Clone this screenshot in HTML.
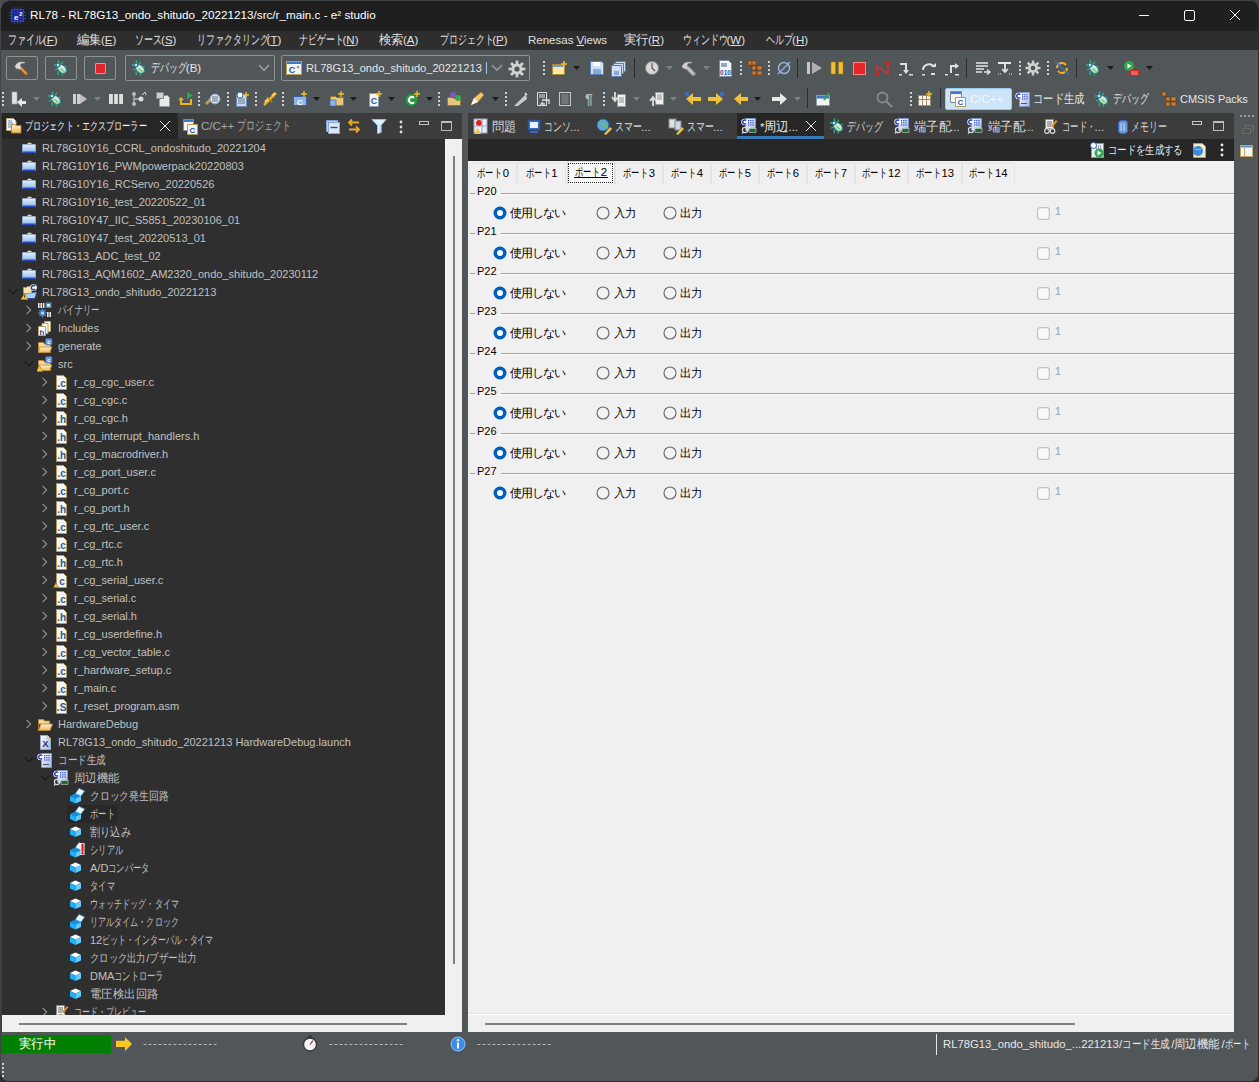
<!DOCTYPE html><html><head><meta charset="utf-8"><style>
html,body{margin:0;padding:0}
body{width:1259px;height:1082px;overflow:hidden;position:relative;background:#515658;font-family:"Liberation Sans", sans-serif}
.t{position:absolute;white-space:nowrap}
.b{position:absolute}
</style></head><body>

<svg width="0" height="0" style="position:absolute">
<defs>
<linearGradient id="gfold" x1="0" y1="0" x2="0" y2="1"><stop offset="0" stop-color="#e6f2ff"/><stop offset="1" stop-color="#8cb8ee"/></linearGradient><symbol id="fold" viewBox="0 0 16 16"><path d="M6 4.5q0-2 2.5-2t2.5 2z" fill="#f2d27a"/><path d="M1.5 4.5h13v8h-13z" fill="url(#gfold)" stroke="#9ab0cc" stroke-width=".8"/><rect x="1.5" y="11.5" width="13" height="1.6" fill="#2848c0"/></symbol>
<symbol id="projc" viewBox="0 0 16 16"><path d="M2.5 3.5h3l1-1h4v7h-8z" fill="#f8e2a8" stroke="#c8a050" stroke-width=".8"/><path d="M4 10l11.5-1.8-2 6.3H3z" fill="#a8d4fa" stroke="#5a80c8" stroke-width=".6"/><path d="M3 14.8h10.6" stroke="#2838c0" stroke-width="1.2"/><circle cx="12.5" cy="3.6" r="3.4" fill="#fff"/><path d="M14.2 2.2a2.2 2.2 0 1 0 0 2.9" fill="none" stroke="#1f4f9f" stroke-width="1.6"/><path d="M3.5 9.2L7 15.6H0z" fill="#f8c84a" stroke="#b08018" stroke-width=".6"/><path d="M3.5 11.2v2.4" stroke="#222" stroke-width=".9"/></symbol>
<symbol id="bin" viewBox="0 0 16 16"><g fill="#e8e8e8"><rect x="1" y="1" width="1.6" height="5"/><rect x="3.4" y="1" width="1.6" height="5"/><rect x="5.8" y="1" width="1.6" height="5"/><rect x="10" y="10" width="1.6" height="5"/><rect x="12.4" y="10" width="1.6" height="5"/></g><path d="M8.5 .5h6v5.5h-6z" fill="#5a8ab0"/><path d="M10 2h3v2.5h-3z" fill="#dfefff"/><circle cx="5.5" cy="11" r="3.2" fill="#3a70b0"/><g stroke="#4a88c8" stroke-width="1.2"><path d="M5.5 6.5v9M1 11h9M2.3 7.8l6.4 6.4M8.7 7.8l-6.4 6.4"/></g><circle cx="5.5" cy="11" r="1.6" fill="#b8e0c8"/></symbol>
<symbol id="inc" viewBox="0 0 16 16"><path d="M7.5 1.5h6v10h-6z" fill="#f4f4f4" stroke="#bba46a"/><path d="M5 3.5h6v10h-6z" fill="#f4f4f4" stroke="#bba46a"/><path d="M1.5 6.5h7v9h-7z" fill="#fff" stroke="#bba46a"/><text x="5" y="14.5" font-size="8" font-family="Liberation Sans" font-weight="bold" text-anchor="middle" fill="#2a4f9a">h</text></symbol>
<symbol id="srcf" viewBox="0 0 16 16"><path d="M1.5 4.5h5l1 1.5h6v8.5h-12z" fill="#f4d898" stroke="#c08a30" stroke-width=".8"/><path d="M2.5 9h12.5l-2.5 5.5h-11z" fill="url(#gfld)" stroke="#c08a30" stroke-width=".8"/><rect x="8.5" y="0.5" width="6.5" height="6.5" rx="1" fill="#6d97e0" stroke="#3d5fa8" stroke-width=".6"/><text x="11.8" y="5.6" font-size="6" font-family="Liberation Sans" font-weight="bold" text-anchor="middle" fill="#fff">c</text></symbol>
<symbol id="srcfw" viewBox="0 0 16 16"><path d="M1.5 4.5h5l1 1.5h6v8.5h-12z" fill="#f4d898" stroke="#c08a30" stroke-width=".8"/><path d="M2.5 9h12.5l-2.5 5.5h-11z" fill="url(#gfld)" stroke="#c08a30" stroke-width=".8"/><rect x="8.5" y="0.5" width="6.5" height="6.5" rx="1" fill="#6d97e0" stroke="#3d5fa8" stroke-width=".6"/><text x="11.8" y="5.6" font-size="6" font-family="Liberation Sans" font-weight="bold" text-anchor="middle" fill="#fff">c</text><path d="M2.5 9.5L5.5 15.5H-.5z" fill="#f8c84a" stroke="#b08018" stroke-width=".6"/></symbol>
<symbol id="fc" viewBox="0 0 16 16"><path d="M3.5 1.5h7l3 3v11h-10z" fill="#f6f6f6" stroke="#b59a55"/><text x="8.6" y="13" font-size="10" font-family="Liberation Sans" font-weight="bold" text-anchor="middle" fill="#2b5797">.c</text></symbol>
<symbol id="fh" viewBox="0 0 16 16"><path d="M3.5 1.5h7l3 3v11h-10z" fill="#f6f6f6" stroke="#b59a55"/><text x="8.6" y="13" font-size="10" font-family="Liberation Sans" font-weight="bold" text-anchor="middle" fill="#2b5797">.h</text></symbol>
<symbol id="fs" viewBox="0 0 16 16"><path d="M3.5 1.5h7l3 3v11h-10z" fill="#f6f6f6" stroke="#b59a55"/><text x="8.6" y="13" font-size="10" font-family="Liberation Sans" font-weight="bold" text-anchor="middle" fill="#2b5797">.S</text></symbol>
<symbol id="fcw" viewBox="0 0 16 16"><path d="M3.5 1.5h7l3 3v11h-10z" fill="#f6f6f6" stroke="#b59a55"/><text x="9" y="13" font-size="10" font-family="Liberation Sans" font-weight="bold" text-anchor="middle" fill="#2b5797">c</text><path d="M.5 15.5l2.5-5 2.5 5z" fill="#f5c542" stroke="#8a6a10" stroke-width=".6"/></symbol>
<linearGradient id="gfld" x1="0" y1="0" x2="0" y2="1"><stop offset="0" stop-color="#fff2c8"/><stop offset="1" stop-color="#e8b860"/></linearGradient><symbol id="hwf" viewBox="0 0 16 16"><path d="M1.5 3.5h5l1 1.5h5v3h-11z" fill="#f4d898" stroke="#c08a30" stroke-width=".8"/><path d="M1.5 14.5l2.5-6.5h11.5l-2.5 6.5z" fill="url(#gfld)" stroke="#c08a30" stroke-width=".8"/><path d="M1.5 4v10.5" stroke="#c08a30" stroke-width=".8"/></symbol>
<symbol id="launch" viewBox="0 0 16 16"><path d="M3.5 1.5h7l3 3v11h-10z" fill="url(#gpage)" stroke="#9aa8c0"/><path d="M10.5 1.5v3h3" fill="#f0d890" stroke="#c8b070" stroke-width=".6"/><text x="8.3" y="13" font-size="9.5" font-family="Liberation Sans" font-weight="bold" text-anchor="middle" fill="#1a3a6a">X</text></symbol>
<linearGradient id="gpage" x1="0" y1="0" x2="1" y2="1"><stop offset="0" stop-color="#ffffff"/><stop offset="1" stop-color="#9fb8e8"/></linearGradient><symbol id="codegen" viewBox="0 0 16 16"><path d="M4.5 1.5h10v14h-10z" fill="url(#gpage)" stroke="#7f95c8"/><g fill="#2a44c8"><rect x="7" y="3" width="1.2" height="1.2"/><rect x="9.2" y="3" width="1.2" height="1.2"/><rect x="11.4" y="3" width="1.2" height="1.2"/><rect x="7" y="5.2" width="1.2" height="1.2"/><rect x="9.2" y="5.2" width="1.2" height="1.2"/><rect x="11.4" y="5.2" width="1.2" height="1.2"/><rect x="7" y="7.4" width="1.2" height="1.2"/><rect x="9.2" y="7.4" width="1.2" height="1.2"/><rect x="11.4" y="7.4" width="1.2" height="1.2"/></g><path d="M6 12.5h6" stroke="#556"/><circle cx="3.5" cy="5" r="3.2" fill="#fff"/><path d="M5.2 3.6a2 2 0 1 0 0 2.8" fill="none" stroke="#1f2fd8" stroke-width="1.4"/></symbol>
<symbol id="periph" viewBox="0 0 16 16"><path d="M4.5 .5h10v12h-10z" fill="url(#gpage)" stroke="#7f95c8"/><g fill="#2a44c8"><rect x="7" y="2" width="1.2" height="1.2"/><rect x="9.2" y="2" width="1.2" height="1.2"/><rect x="11.4" y="2" width="1.2" height="1.2"/><rect x="7" y="4.2" width="1.2" height="1.2"/><rect x="9.2" y="4.2" width="1.2" height="1.2"/><rect x="11.4" y="4.2" width="1.2" height="1.2"/><rect x="7" y="6.4" width="1.2" height="1.2"/><rect x="9.2" y="6.4" width="1.2" height="1.2"/><rect x="11.4" y="6.4" width="1.2" height="1.2"/></g><circle cx="3.5" cy="4" r="3.2" fill="#fff"/><path d="M5.2 2.6a2 2 0 1 0 0 2.8" fill="none" stroke="#1f2fd8" stroke-width="1.4"/><circle cx="4" cy="12" r="2.6" fill="none" stroke="#d8d8d8" stroke-width="1.2"/><path d="M1 15.5l1.5-1.5" stroke="#d8d8d8" stroke-width="1.4"/><rect x="8" y="10.5" width="7" height="4" fill="#1e6a2a" stroke="#ccc" stroke-width=".6"/></symbol>
<symbol id="cube" viewBox="0 0 16 16"><path d="M1 5L6.5 2.5 12 5 6.5 7.5z" fill="#ffffff"/><path d="M1 5L6.5 7.5V13L1 10.5z" fill="#1eb0f8"/><path d="M6.5 7.5L12 5V10.5L6.5 13z" fill="#62cbfa"/></symbol>
<symbol id="cubep" viewBox="0 0 16 16"><path d="M1 8L6.5 5.5 12 8 6.5 10.5z" fill="#1890d8"/><path d="M1 8L6.5 10.5V15.5L1 13z" fill="#1eb0f8"/><path d="M6.5 10.5L12 8V13L6.5 15.5z" fill="#62cbfa"/><path d="M6.5 5.5L12 8 15.5 3 10 .5z" fill="#eef8ff" stroke="#3ab4f4" stroke-width=".7"/></symbol>
<symbol id="cubee" viewBox="0 0 16 16"><path d="M1 8L6.5 5.5 12 8 6.5 10.5z" fill="#1890d8"/><path d="M1 8L6.5 10.5V15.5L1 13z" fill="#1eb0f8"/><path d="M6.5 10.5L12 8V13L6.5 15.5z" fill="#62cbfa"/><path d="M6.5 5.5L12 8 15.5 3 10 .5z" fill="#eef8ff" stroke="#3ab4f4" stroke-width=".7"/><rect x="11.5" y="1" width="4" height="12" fill="#f4f4f4"/><path d="M13.5 2.5v6.5" stroke="#f01010" stroke-width="2.2" stroke-linecap="round"/><circle cx="13.5" cy="11.3" r="1.2" fill="#f01010"/></symbol>
<symbol id="cpreview" viewBox="0 0 16 16"><path d="M3.5 1.5h8v9h-8z" fill="#f0f0f0" stroke="#888"/><path d="M5 4h5M5 6h5M5 8h4" stroke="#444" stroke-width=".8"/><path d="M9 8l5-6 1.5 1.2-5 6z" fill="#f08a20"/><circle cx="5" cy="13" r="2.3" fill="none" stroke="#ddd" stroke-width="1.2"/><circle cx="10.5" cy="13" r="2.3" fill="none" stroke="#ddd" stroke-width="1.2"/></symbol>
<symbol id="chevr" viewBox="0 0 8 10"><path d="M1.5 .8l4.2 4.2-4.2 4.2" fill="none" stroke="#959595" stroke-width="1.1"/></symbol>
<symbol id="chevd" viewBox="0 0 10 8"><path d="M.8 1.5l4.2 4.2 4.2-4.2" fill="none" stroke="#1c1c1c" stroke-width="1.3"/></symbol>
<symbol id="ddarrow" viewBox="0 0 8 8"><path d="M0 2h7l-3.5 4z" fill="#1b1b1b"/></symbol>
<symbol id="ddarrowg" viewBox="0 0 8 8"><path d="M0 2h7l-3.5 4z" fill="#7d8285"/></symbol>
<linearGradient id="gbug" x1="0" y1="0" x2="1" y2="1"><stop offset="0" stop-color="#ffffff"/><stop offset="1" stop-color="#8fd08a"/></linearGradient><symbol id="bug" viewBox="0 0 16 16"><g stroke="#3fae88" stroke-width="1.3" stroke-linecap="round"><path d="M5.5 1v2.5M9.5 2l-1 2M1.5 5h2.5M2.5 10l2-1M13 6.5l-2 .5M13.5 11.5l-2-1.5M5.5 14.5l-.5-2.5M9.5 15l-.5-2"/></g><ellipse cx="9" cy="9" rx="5" ry="3.6" transform="rotate(45 9 9)" fill="url(#gbug)" stroke="#1f7fa0" stroke-width="1"/><circle cx="5.3" cy="5.3" r="2.2" fill="#2a8aa8"/><circle cx="5" cy="5" r="1" fill="#fff"/><path d="M7.5 8l3.5 3.5" stroke="#3a9a4a" stroke-width=".8"/></symbol>
<symbol id="hammer" viewBox="0 0 16 16"><path d="M6.8 8.2l5.6 5.6" stroke="#8a4a12" stroke-width="4.6" stroke-linecap="round"/><path d="M6.8 8.2l5.4 5.4" stroke="#d49a58" stroke-width="2.4" stroke-linecap="round"/><path d="M.8 6.2l2.8-3.4 2.6-.8h4.6l-.2 1-3.6.6-1 2.4 1.6 1.6-2.4 2.2-1.4-1.6-1.4.9z" fill="#dcdcdc" stroke="#9a9a9a" stroke-width=".5"/></symbol>
<symbol id="gear" viewBox="0 0 16 16"><g fill="#d0d0d0"><circle cx="8" cy="8" r="5"/><rect x="6.8" y="0.5" width="2.4" height="15"/><rect x="0.5" y="6.8" width="15" height="2.4"/><rect x="6.8" y="0.5" width="2.4" height="15" transform="rotate(45 8 8)"/><rect x="6.8" y="0.5" width="2.4" height="15" transform="rotate(-45 8 8)"/></g><circle cx="8" cy="8" r="2.3" fill="#515658"/></symbol>
<symbol id="radioon" viewBox="0 0 14 14"><circle cx="7" cy="7" r="6.5" fill="#005fb8"/><circle cx="7" cy="7" r="3" fill="#fff"/></symbol>
<symbol id="radiooff" viewBox="0 0 14 14"><circle cx="7" cy="7" r="6" fill="#f3f3f3" stroke="#6a6a6a" stroke-width="1.15"/></symbol>
<symbol id="chk" viewBox="0 0 13 13"><rect x="0.6" y="0.6" width="11.8" height="11.8" rx="2.5" fill="#f9f9f9" stroke="#c2c2c2" stroke-width="1.2"/></symbol>
<symbol id="dots" viewBox="0 0 3 14"><g fill="#cfcfcf"><rect x="0" y="0" width="2" height="2"/><rect x="0" y="4" width="2" height="2"/><rect x="0" y="8" width="2" height="2"/><rect x="0" y="12" width="2" height="2"/></g></symbol>
</defs></svg>

<div class="b" style="left:0px;top:0px;width:1259px;height:31px;background:#1f1f1f"></div>
<svg class="b" style="left:9px;top:7px;" width="17" height="17" viewBox="0 0 17 17"><g stroke="#2a3cb0" stroke-width="1"><path d="M5.5 0v3M8.5 0v3M11.5 0v3M5.5 14v3M8.5 14v3M11.5 14v3M0 5.5h3M0 8.5h3M0 11.5h3M14 5.5h3M14 8.5h3M14 11.5h3"/></g><rect x="2.5" y="2.5" width="12" height="12" fill="#1f2f9a" stroke="#2f42c0"/><text x="7.3" y="13" font-size="8" font-family="Liberation Sans" font-weight="bold" text-anchor="middle" fill="#fff">e</text><text x="11.8" y="8.5" font-size="5.5" font-family="Liberation Sans" font-weight="bold" text-anchor="middle" fill="#fff">2</text></svg>
<div class="t" style="left:30px;top:6px;height:18px;line-height:18px;font-size:11.7px;color:#ffffff;">RL78 - RL78G13_ondo_shitudo_20221213/src/r_main.c - e² studio</div>
<div class="b" style="left:1139px;top:15px;width:10px;height:1px;background:#fff"></div>
<div class="b" style="left:1184px;top:10px;width:9px;height:9px;border:1px solid #fff;border-radius:2px"></div>
<svg class="b" style="left:1229px;top:9px;" width="12" height="12" viewBox="0 0 12 12"><path d="M1 1l10 10M11 1l-10 10" stroke="#fff" stroke-width="1"/></svg>
<div class="b" style="left:0px;top:31px;width:1259px;height:19px;background:#2e2e2e"></div>
<div class="t" style="left:8px;top:31px;height:19px;line-height:19px;font-size:11.5px;color:#e0e0e0;text-decoration:none"><span style="display:inline-block;width:34.80px"><span style="display:inline-block;font-size:12.65px;transform:scaleX(0.6877);transform-origin:0 0">ファイル</span></span>(<u>F</u>)</div>
<div class="t" style="left:77px;top:31px;height:19px;line-height:19px;font-size:11.5px;color:#e0e0e0;text-decoration:none"><span style="display:inline-block;width:24.00px"><span style="display:inline-block;font-size:12.65px;transform:scaleX(0.9486);transform-origin:0 0">編集</span></span>(<u>E</u>)</div>
<div class="t" style="left:135px;top:31px;height:19px;line-height:19px;font-size:11.5px;color:#e0e0e0;text-decoration:none"><span style="display:inline-block;width:26.10px"><span style="display:inline-block;font-size:12.65px;transform:scaleX(0.6877);transform-origin:0 0">ソース</span></span>(<u>S</u>)</div>
<div class="t" style="left:197px;top:31px;height:19px;line-height:19px;font-size:11.5px;color:#e0e0e0;text-decoration:none"><span style="display:inline-block;width:69.60px"><span style="display:inline-block;font-size:12.65px;transform:scaleX(0.6877);transform-origin:0 0">リファクタリング</span></span>(<u>T</u>)</div>
<div class="t" style="left:299px;top:31px;height:19px;line-height:19px;font-size:11.5px;color:#e0e0e0;text-decoration:none"><span style="display:inline-block;width:43.50px"><span style="display:inline-block;font-size:12.65px;transform:scaleX(0.6877);transform-origin:0 0">ナビゲート</span></span>(<u>N</u>)</div>
<div class="t" style="left:379px;top:31px;height:19px;line-height:19px;font-size:11.5px;color:#e0e0e0;text-decoration:none"><span style="display:inline-block;width:24.00px"><span style="display:inline-block;font-size:12.65px;transform:scaleX(0.9486);transform-origin:0 0">検索</span></span>(<u>A</u>)</div>
<div class="t" style="left:440px;top:31px;height:19px;line-height:19px;font-size:11.5px;color:#e0e0e0;text-decoration:none"><span style="display:inline-block;width:52.20px"><span style="display:inline-block;font-size:12.65px;transform:scaleX(0.6877);transform-origin:0 0">プロジェクト</span></span>(<u>P</u>)</div>
<div class="t" style="left:528px;top:31px;height:19px;line-height:19px;font-size:11.5px;color:#e0e0e0;text-decoration:none">Renesas <u>V</u>iews</div>
<div class="t" style="left:624px;top:31px;height:19px;line-height:19px;font-size:11.5px;color:#e0e0e0;text-decoration:none"><span style="display:inline-block;width:24.00px"><span style="display:inline-block;font-size:12.65px;transform:scaleX(0.9486);transform-origin:0 0">実行</span></span>(<u>R</u>)</div>
<div class="t" style="left:683px;top:31px;height:19px;line-height:19px;font-size:11.5px;color:#e0e0e0;text-decoration:none"><span style="display:inline-block;width:43.50px"><span style="display:inline-block;font-size:12.65px;transform:scaleX(0.6877);transform-origin:0 0">ウィンドウ</span></span>(<u>W</u>)</div>
<div class="t" style="left:766px;top:31px;height:19px;line-height:19px;font-size:11.5px;color:#e0e0e0;text-decoration:none"><span style="display:inline-block;width:26.10px"><span style="display:inline-block;font-size:12.65px;transform:scaleX(0.6877);transform-origin:0 0">ヘルプ</span></span>(<u>H</u>)</div>
<div class="b" style="left:6px;top:56px;width:32px;height:24px;border:1px solid #8f9293;box-sizing:border-box;border-radius:2px"></div>
<svg class="b" style="left:14px;top:60px" width="16" height="16"><use href="#hammer"/></svg>
<div class="b" style="left:45px;top:56px;width:32px;height:24px;border:1px solid #8f9293;box-sizing:border-box;border-radius:2px"></div>
<svg class="b" style="left:53px;top:60px" width="16" height="16"><use href="#bug"/></svg>
<div class="b" style="left:84px;top:56px;width:32px;height:24px;border:1px solid #8f9293;box-sizing:border-box;border-radius:2px"></div>
<div class="b" style="left:95px;top:63px;width:11px;height:11px;background:#e0282c;border:1px solid #ff8888;box-sizing:border-box;border-radius:1px"></div>
<div class="b" style="left:125px;top:55px;width:150px;height:26px;border:1px solid #8f9293;box-sizing:border-box;border-radius:2px"></div>
<svg class="b" style="left:131px;top:60px" width="16" height="16"><use href="#bug"/></svg>
<div class="t" style="left:151px;top:59px;height:18px;line-height:18px;font-size:11.5px;color:#e6e6e6;"><span style="display:inline-block;width:34.80px"><span style="display:inline-block;font-size:12.65px;transform:scaleX(0.6877);transform-origin:0 0">デバッグ</span></span>(B)</div>
<svg class="b" style="left:258px;top:64px;" width="12" height="8" viewBox="0 0 12 8"><path d="M1 1.2l5 5 5-5" fill="none" stroke="#8f9395" stroke-width="1.8"/></svg>
<div class="b" style="left:281px;top:55px;width:249px;height:26px;border:1px solid #8f9293;box-sizing:border-box;border-radius:2px"></div>
<svg class="b" style="left:286px;top:60px;" width="16" height="16" viewBox="0 0 16 16"><rect x="0.5" y="1.5" width="15" height="13" fill="#f4f4f4" stroke="#b59a55"/><rect x="1" y="2" width="14" height="2" fill="#3c78c8"/><text x="6" y="13" font-size="9" font-family="Liberation Sans" font-weight="bold" fill="#2b5797" text-anchor="middle">C</text><text x="12" y="9" font-size="6" font-family="Liberation Sans" fill="#2b5797" text-anchor="middle">×</text></svg>
<div class="t" style="left:306px;top:59px;height:18px;line-height:18px;font-size:11.1px;color:#e6e6e6;">RL78G13_ondo_shitudo_20221213</div>
<div class="b" style="left:486px;top:62px;width:1px;height:12px;background:#9cc8f0"></div>
<svg class="b" style="left:491px;top:64px;" width="12" height="8" viewBox="0 0 12 8"><path d="M1 1.2l5 5 5-5" fill="none" stroke="#8f9395" stroke-width="1.8"/></svg>
<svg class="b" style="left:508px;top:60px" width="18" height="18"><use href="#gear"/></svg>
<svg class="b" style="left:543px;top:61px" width="3" height="14"><use href="#dots"/></svg>
<svg class="b" style="left:551px;top:60px;" width="17" height="17" viewBox="0 0 17 17"><path d="M1.5 4.5h12v10h-12z" fill="#fbe9a8" stroke="#a88a3a"/><rect x="2" y="5" width="11" height="2" fill="#6a9ad8"/><path d="M13 1v6M10 4h6" stroke="#f0c020" stroke-width="1.6"/></svg>
<svg class="b" style="left:573px;top:64px" width="8" height="8"><use href="#ddarrow"/></svg>
<svg class="b" style="left:589px;top:60px;" width="16" height="16" viewBox="0 0 16 16"><path d="M1.5 1.5h11l2 2v11h-13z" fill="#cfe0f6" stroke="#5a7fb8"/><rect x="4" y="2" width="7" height="4" fill="#fff"/><rect x="4" y="9" width="8" height="5" fill="#8aa8d8"/></svg>
<svg class="b" style="left:611px;top:60px;" width="17" height="17" viewBox="0 0 17 17"><path d="M4.5 1.5h10v10h-10z" fill="#cfe0f6" stroke="#5a7fb8"/><path d="M2.5 3.5h10v10h-10z" fill="#cfe0f6" stroke="#5a7fb8"/><path d="M.5 5.5h10v11h-10z" fill="#cfe0f6" stroke="#5a7fb8"/><rect x="3" y="11" width="5" height="4" fill="#8aa8d8"/></svg>
<div class="b" style="left:634px;top:58px;width:1px;height:20px;background:#2a2d2f"></div>
<svg class="b" style="left:644px;top:60px;" width="16" height="16" viewBox="0 0 16 16"><circle cx="8" cy="8" r="6.5" fill="#d8d8d8" stroke="#888"/><path d="M8 3v5l3 3" stroke="#555" stroke-width="1.2" fill="none"/></svg>
<svg class="b" style="left:666px;top:64px" width="8" height="8"><use href="#ddarrowg"/></svg>
<svg class="b" style="left:681px;top:60px;" width="16" height="16" viewBox="0 0 16 16"><path d="M6.8 8.2l5.6 5.6" stroke="#8f8f8f" stroke-width="4.6" stroke-linecap="round"/><path d="M6.8 8.2l5.4 5.4" stroke="#c4c4c4" stroke-width="2.4" stroke-linecap="round"/><path d="M.8 6.2l2.8-3.4 2.6-.8h4.6l-.2 1-3.6.6-1 2.4 1.6 1.6-2.4 2.2-1.4-1.6-1.4.9z" fill="#d0d0d0" stroke="#8a8a8a" stroke-width=".5"/></svg>
<svg class="b" style="left:703px;top:64px" width="8" height="8"><use href="#ddarrowg"/></svg>
<svg class="b" style="left:718px;top:60px;" width="16" height="17" viewBox="0 0 16 17"><path d="M1.5 .5h9l3 3v13h-12z" fill="#f6f6f6" stroke="#7a8aa8"/><path d="M3 4h6M3 6h6" stroke="#2b5797"/><text x="7.5" y="15" font-size="6.5" font-family="Liberation Sans" font-weight="bold" fill="#2b5797" text-anchor="middle">010</text></svg>
<svg class="b" style="left:740px;top:61px" width="3" height="14"><use href="#dots"/></svg>
<svg class="b" style="left:747px;top:60px;" width="16" height="16" viewBox="0 0 16 16"><g fill="#c87a3a" stroke="#6a3a10" stroke-width=".6"><rect x="1" y="1" width="4" height="4"/><rect x="5" y="1" width="4" height="4"/><rect x="5" y="6" width="4" height="4"/><rect x="10" y="6" width="5" height="4"/><rect x="5" y="11" width="4" height="4"/><rect x="10" y="11" width="5" height="4"/></g></svg>
<svg class="b" style="left:768px;top:61px" width="3" height="14"><use href="#dots"/></svg>
<svg class="b" style="left:776px;top:60px;" width="16" height="16" viewBox="0 0 16 16"><circle cx="8" cy="8" r="5.5" fill="none" stroke="#8fb0d8" stroke-width="1.6"/><path d="M2 14L14 2" stroke="#8fb0d8" stroke-width="1.5"/></svg>
<div class="b" style="left:797px;top:58px;width:1px;height:20px;background:#2a2d2f"></div>
<svg class="b" style="left:806px;top:60px;" width="17" height="16" viewBox="0 0 17 16"><rect x="1" y="2" width="3" height="12" fill="#c8c8c8"/><path d="M6 2l10 6-10 6z" fill="#b0b0b0"/></svg>
<svg class="b" style="left:830px;top:60px;" width="14" height="16" viewBox="0 0 14 16"><rect x="1" y="2" width="4.5" height="12" fill="#f0c030" stroke="#a07a10" stroke-width=".6"/><rect x="8.5" y="2" width="4.5" height="12" fill="#f0c030" stroke="#a07a10" stroke-width=".6"/></svg>
<svg class="b" style="left:852px;top:60px;" width="15" height="16" viewBox="0 0 15 16"><rect x="1.5" y="2.5" width="12" height="12" fill="#e8262a" stroke="#ff8a8a"/></svg>
<svg class="b" style="left:875px;top:60px;" width="15" height="16" viewBox="0 0 15 16"><path d="M2 14V6l11 8V3" fill="none" stroke="#d43030" stroke-width="1.5"/><circle cx="2.5" cy="14" r="2" fill="#e02020"/><circle cx="12.5" cy="3" r="2" fill="#e02020"/></svg>
<svg class="b" style="left:898px;top:60px;" width="16" height="16" viewBox="0 0 16 16"><path d="M2 4h6v7" fill="none" stroke="#e0e0e0" stroke-width="2"/><path d="M5 10h6l-3 4z" fill="#e0e0e0"/><rect x="1" y="14" width="3" height="1.5" fill="#e0e0e0"/><rect x="11" y="14" width="4" height="1.5" fill="#e0e0e0"/></svg>
<svg class="b" style="left:921px;top:60px;" width="16" height="16" viewBox="0 0 16 16"><path d="M2 10a6 6 0 0 1 11 -3" fill="none" stroke="#e0e0e0" stroke-width="2"/><path d="M10 7h5v-4z" fill="#e0e0e0"/><rect x="1" y="14" width="3" height="1.5" fill="#e0e0e0"/><rect x="10" y="13" width="4" height="2" fill="#e0e0e0"/></svg>
<svg class="b" style="left:944px;top:60px;" width="16" height="16" viewBox="0 0 16 16"><path d="M7 13V6h5" fill="none" stroke="#e0e0e0" stroke-width="2"/><path d="M11 3l4 3-4 3z" fill="#e0e0e0"/><rect x="1" y="14" width="3" height="1.5" fill="#e0e0e0"/><rect x="11" y="14" width="4" height="1.5" fill="#e0e0e0"/></svg>
<div class="b" style="left:966px;top:58px;width:1px;height:20px;background:#2a2d2f"></div>
<svg class="b" style="left:975px;top:60px;" width="16" height="16" viewBox="0 0 16 16"><path d="M1 3h12M1 6h12M1 9h8M1 12h6" stroke="#e6e6e6" stroke-width="1.6"/><path d="M9 12h5M12 9.5l3 2.5-3 2.5" fill="none" stroke="#e6e6e6" stroke-width="1.4"/></svg>
<svg class="b" style="left:997px;top:60px;" width="17" height="16" viewBox="0 0 17 16"><path d="M1 3h13M8 3v9" stroke="#e6e6e6" stroke-width="1.8"/><path d="M5 9l3 3 3-3" fill="none" stroke="#e6e6e6" stroke-width="1.6"/><path d="M1 14h3M12 14h4" stroke="#e6e6e6" stroke-dasharray="1 1"/></svg>
<svg class="b" style="left:1019px;top:61px" width="3" height="14"><use href="#dots"/></svg>
<svg class="b" style="left:1025px;top:60px" width="16" height="16"><use href="#gear"/></svg>
<svg class="b" style="left:1047px;top:61px" width="3" height="14"><use href="#dots"/></svg>
<svg class="b" style="left:1054px;top:60px;" width="16" height="16" viewBox="0 0 16 16"><path d="M3 8a5 5 0 0 1 9 -3" fill="none" stroke="#f0b020" stroke-width="2"/><path d="M13 8a5 5 0 0 1 -9 3" fill="none" stroke="#f0b020" stroke-width="2"/><path d="M1 1l14 14" stroke="#3a6ab8" stroke-width="1.6"/></svg>
<div class="b" style="left:1076px;top:58px;width:1px;height:20px;background:#2a2d2f"></div>
<svg class="b" style="left:1085px;top:60px" width="16" height="16"><use href="#bug"/></svg>
<svg class="b" style="left:1107px;top:64px" width="8" height="8"><use href="#ddarrow"/></svg>
<svg class="b" style="left:1123px;top:60px;" width="18" height="17" viewBox="0 0 18 17"><circle cx="6" cy="6" r="5" fill="#2fa850"/><path d="M4.5 3.5v5l4-2.5z" fill="#fff"/><rect x="7" y="10" width="9" height="6" rx="1" fill="#d42020"/><path d="M8 12h7M8 14h7" stroke="#fff" stroke-width=".6"/></svg>
<svg class="b" style="left:1146px;top:64px" width="8" height="8"><use href="#ddarrow"/></svg>
<svg class="b" style="left:2px;top:92px" width="3" height="14"><use href="#dots"/></svg>
<svg class="b" style="left:11px;top:91px;" width="16" height="16" viewBox="0 0 16 16"><rect x="1" y="1" width="5" height="12" fill="#e0e0e0" stroke="#aaa" stroke-width=".6"/><path d="M6 11l5-4v3h4v3h-4v3z" fill="#e8e8e8"/></svg>
<svg class="b" style="left:33px;top:95px" width="8" height="8"><use href="#ddarrowg"/></svg>
<svg class="b" style="left:47px;top:91px" width="16" height="16"><use href="#bug"/></svg>
<svg class="b" style="left:72px;top:91px;" width="16" height="16" viewBox="0 0 16 16"><rect x="1" y="3" width="3" height="10" fill="#d0d0d0"/><rect x="5" y="3" width="3" height="10" fill="#d0d0d0"/><path d="M8 3l7 5-7 5z" fill="#c0c0c0"/></svg>
<svg class="b" style="left:94px;top:95px" width="8" height="8"><use href="#ddarrowg"/></svg>
<svg class="b" style="left:108px;top:91px;" width="16" height="16" viewBox="0 0 16 16"><rect x="1" y="3" width="14" height="10" fill="#e0e0e0"/><path d="M5.5 3v10M10.5 3v10" stroke="#515658" stroke-width="1.3"/></svg>
<svg class="b" style="left:131px;top:91px;" width="16" height="16" viewBox="0 0 16 16"><circle cx="3" cy="3" r="2" fill="#bbb"/><circle cx="3" cy="13" r="2" fill="#bbb"/><path d="M3 3v10M3 8h6" stroke="#bbb" stroke-width="1.3"/><circle cx="10" cy="8" r="2.5" fill="#ddd"/><path d="M11 4l3-3 1 3" fill="none" stroke="#ddd"/></svg>
<svg class="b" style="left:155px;top:91px;" width="16" height="16" viewBox="0 0 16 16"><path d="M4.5 4.5h8l2 2v9h-10z" fill="#e8e8e8" stroke="#999"/><path d="M1.5 1.5h7v6h-7z" fill="#cfcfcf" stroke="#888"/></svg>
<svg class="b" style="left:178px;top:91px;" width="16" height="16" viewBox="0 0 16 16"><path d="M3 8v5h10V8" fill="none" stroke="#f0b020" stroke-width="2"/><path d="M9 1l6 3.5-6 3.5z" fill="#2fa850"/><path d="M1 9l2-2 2 2" fill="none" stroke="#f0b020" stroke-width="1.5"/></svg>
<svg class="b" style="left:198px;top:92px" width="3" height="14"><use href="#dots"/></svg>
<svg class="b" style="left:205px;top:91px;" width="16" height="16" viewBox="0 0 16 16"><path d="M1 13l8-8" stroke="#c89a50" stroke-width="3"/><circle cx="10" cy="8" r="5" fill="#d8e4f0" stroke="#8aa0c0"/><path d="M7 6h6M7 8h6M7 10h6" stroke="#556" stroke-width=".8"/></svg>
<svg class="b" style="left:227px;top:92px" width="3" height="14"><use href="#dots"/></svg>
<svg class="b" style="left:234px;top:91px;" width="16" height="16" viewBox="0 0 16 16"><path d="M2.5 3.5h10v12h-10z" fill="#c8d8f0" stroke="#6a88b8"/><path d="M4 8h7M4 10h7M4 12h7" stroke="#567" stroke-width=".8"/><circle cx="6" cy="4" r="3" fill="#fff" stroke="#3d5fa8"/><path d="M12 1v6M9 4h6" stroke="#f0c020" stroke-width="1.4"/></svg>
<svg class="b" style="left:255px;top:92px" width="3" height="14"><use href="#dots"/></svg>
<svg class="b" style="left:262px;top:91px;" width="16" height="16" viewBox="0 0 16 16"><path d="M2 14L14 2" stroke="#f0b020" stroke-width="2.5"/><path d="M5 6l5 5" stroke="#c08a10" stroke-width="1.2"/><path d="M3 11l3-3M10 5l3-3" stroke="#ffd060" stroke-width="2"/></svg>
<svg class="b" style="left:282px;top:92px" width="3" height="14"><use href="#dots"/></svg>
<svg class="b" style="left:292px;top:91px;" width="16" height="16" viewBox="0 0 16 16"><path d="M1.5 5.5h13v9h-13z" fill="#8fb5e8" stroke="#3d5fa8"/><text x="8" y="13.5" font-size="8" font-family="Liberation Sans" font-weight="bold" fill="#fff" text-anchor="middle">C</text><path d="M12 0v6M9 3h6" stroke="#f0c020" stroke-width="1.4"/></svg>
<svg class="b" style="left:313px;top:95px" width="8" height="8"><use href="#ddarrow"/></svg>
<svg class="b" style="left:329px;top:91px;" width="16" height="16" viewBox="0 0 16 16"><path d="M1.5 5.5h5l1 1h7v8h-13z" fill="#e9c77a" stroke="#9a7a2a"/><rect x="1" y="9" width="6" height="6" fill="#8fb5e8" stroke="#3d5fa8" stroke-width=".6"/><path d="M12 0v6M9 3h6" stroke="#f0c020" stroke-width="1.4"/></svg>
<svg class="b" style="left:350px;top:95px" width="8" height="8"><use href="#ddarrow"/></svg>
<svg class="b" style="left:367px;top:91px;" width="16" height="16" viewBox="0 0 16 16"><path d="M2.5 2.5h9v13h-9z" fill="#f4f4f4" stroke="#8a9ab8"/><text x="7" y="13" font-size="9" font-family="Liberation Sans" font-weight="bold" fill="#2b5797" text-anchor="middle">C</text><path d="M12 0v6M9 3h6" stroke="#f0c020" stroke-width="1.4"/></svg>
<svg class="b" style="left:388px;top:95px" width="8" height="8"><use href="#ddarrow"/></svg>
<svg class="b" style="left:404px;top:91px;" width="17" height="16" viewBox="0 0 17 16"><circle cx="7.5" cy="9" r="6.5" fill="#2a9a48" stroke="#1a6a30" stroke-width=".8"/><path d="M10 6.8a3 3 0 1 0 0 4.4" fill="none" stroke="#fff" stroke-width="2"/><path d="M13 0v6M10 3h6" stroke="#f0c020" stroke-width="1.4"/></svg>
<svg class="b" style="left:426px;top:95px" width="8" height="8"><use href="#ddarrow"/></svg>
<svg class="b" style="left:438px;top:92px" width="3" height="14"><use href="#dots"/></svg>
<svg class="b" style="left:446px;top:91px;" width="16" height="16" viewBox="0 0 16 16"><path d="M1.5 6.5h5l1 1h7v7h-13z" fill="#e9c77a" stroke="#9a7a2a"/><circle cx="7" cy="4" r="3" fill="#7a5ab8"/><circle cx="12" cy="7" r="3" fill="#3aa850"/></svg>
<svg class="b" style="left:469px;top:91px;" width="16" height="16" viewBox="0 0 16 16"><path d="M2 14l3-7 7-6 3 3-6 7z" fill="#f0c870" stroke="#a07a20" stroke-width=".8"/><path d="M2 14l3-7 4 4z" fill="#fff"/></svg>
<svg class="b" style="left:492px;top:95px" width="8" height="8"><use href="#ddarrow"/></svg>
<svg class="b" style="left:505px;top:92px" width="3" height="14"><use href="#dots"/></svg>
<svg class="b" style="left:513px;top:91px;" width="16" height="16" viewBox="0 0 16 16"><path d="M1 15l12-12 1 5-9 7z" fill="#c8c8c8"/><path d="M12 2l2 2" stroke="#eee" stroke-width="1.5"/></svg>
<svg class="b" style="left:535px;top:91px;" width="16" height="16" viewBox="0 0 16 16"><path d="M2.5 1.5h9v13h-9z" fill="none" stroke="#ddd"/><path d="M4 4h6M4 6h6" stroke="#ddd"/><path d="M7 9h7v4M10 13h-4l2-2" fill="none" stroke="#ddd" stroke-width="1.3"/></svg>
<svg class="b" style="left:558px;top:91px;" width="14" height="16" viewBox="0 0 14 16"><rect x="1.5" y="1.5" width="11" height="13" fill="none" stroke="#c8c8c8"/><path d="M3.5 4h7M3.5 6h7M3.5 8h7M3.5 10h7M3.5 12h7" stroke="#aaa" stroke-width=".8"/></svg>
<div class="t" style="left:585px;top:89px;height:20px;line-height:20px;font-size:14px;color:#b8b8b8;font-weight:bold">¶</div>
<svg class="b" style="left:603px;top:92px" width="3" height="14"><use href="#dots"/></svg>
<svg class="b" style="left:611px;top:91px;" width="16" height="16" viewBox="0 0 16 16"><path d="M6.5 3.5h8v12h-8z" fill="#f0f0f0" stroke="#999"/><path d="M8 7h5M8 9h5M8 11h5" stroke="#777" stroke-width=".8"/><path d="M4 1v8M1 6l3 4 3-4" fill="none" stroke="#ddd" stroke-width="1.8"/></svg>
<svg class="b" style="left:633px;top:95px" width="8" height="8"><use href="#ddarrowg"/></svg>
<svg class="b" style="left:649px;top:91px;" width="16" height="16" viewBox="0 0 16 16"><path d="M6.5 1.5h8v12h-8z" fill="#f0f0f0" stroke="#999"/><path d="M8 4h5M8 6h5M8 8h5" stroke="#777" stroke-width=".8"/><path d="M4 15V7M1 10l3-4 3 4" fill="none" stroke="#ddd" stroke-width="1.8"/></svg>
<svg class="b" style="left:670px;top:95px" width="8" height="8"><use href="#ddarrowg"/></svg>
<svg class="b" style="left:684px;top:91px;" width="18" height="16" viewBox="0 0 18 16"><path d="M17 8H7" stroke="#f0c040" stroke-width="4"/><path d="M9 2l-7 6 7 6z" fill="#f0c040"/><circle cx="3" cy="3" r="2.5" fill="#3a6ab8"/></svg>
<svg class="b" style="left:707px;top:91px;" width="18" height="16" viewBox="0 0 18 16"><path d="M1 8h10" stroke="#f0c040" stroke-width="4"/><path d="M9 2l7 6-7 6z" fill="#f0c040"/><circle cx="15" cy="3" r="2.5" fill="#3a6ab8"/></svg>
<svg class="b" style="left:733px;top:91px;" width="16" height="16" viewBox="0 0 16 16"><path d="M15 8H6" stroke="#f0c040" stroke-width="4"/><path d="M8 2l-7 6 7 6z" fill="#f0c040"/></svg>
<svg class="b" style="left:754px;top:95px" width="8" height="8"><use href="#ddarrow"/></svg>
<svg class="b" style="left:771px;top:91px;" width="18" height="16" viewBox="0 0 18 16"><path d="M1 8h10" stroke="#e8e8e8" stroke-width="4"/><path d="M9 2l7 6-7 6z" fill="#e8e8e8"/></svg>
<svg class="b" style="left:794px;top:95px" width="8" height="8"><use href="#ddarrowg"/></svg>
<div class="b" style="left:807px;top:88px;width:1px;height:20px;background:#2a2d2f"></div>
<svg class="b" style="left:815px;top:91px;" width="16" height="16" viewBox="0 0 16 16"><path d="M1.5 4.5h13v10h-13z" fill="#f4f4f4" stroke="#8a9ab8"/><rect x="2" y="5" width="12" height="2.5" fill="#3c78c8"/><path d="M9 9l5-7" stroke="#2fa850" stroke-width="2"/></svg>
<svg class="b" style="left:876px;top:91px;" width="17" height="17" viewBox="0 0 17 17"><circle cx="6.5" cy="6.5" r="5" fill="none" stroke="#868b8e" stroke-width="1.8"/><path d="M10 10l6 6" stroke="#868b8e" stroke-width="2.2"/></svg>
<svg class="b" style="left:910px;top:92px" width="3" height="14"><use href="#dots"/></svg>
<svg class="b" style="left:917px;top:91px;" width="16" height="16" viewBox="0 0 16 16"><path d="M1.5 4.5h12v10h-12z" fill="#f4f4f4" stroke="#9a8a6a"/><path d="M1.5 8.5h12M5.5 4.5v10M9.5 4.5v10" stroke="#9a8a6a"/><path d="M12 0v6M9 3h6" stroke="#f0c020" stroke-width="1.4"/></svg>
<div class="b" style="left:940px;top:88px;width:1px;height:20px;background:#2a2d2f"></div>
<div class="b" style="left:945px;top:88px;width:67px;height:22px;background:#cce4f7;border:1px solid #99c9ef;box-sizing:border-box;border-radius:2px"></div>
<svg class="b" style="left:950px;top:91px;" width="16" height="16" viewBox="0 0 16 16"><path d="M.5 .5h11v11h-11z" fill="#f4f4f4" stroke="#888"/><rect x="1" y="1" width="10" height="2" fill="#3c78c8"/><path d="M5.5 6.5h10v9h-10z" fill="#fff" stroke="#b59a55"/><text x="10.5" y="14" font-size="8" font-family="Liberation Sans" font-weight="bold" fill="#2b5797" text-anchor="middle">C</text></svg>
<div class="t" style="left:970px;top:90px;height:18px;line-height:18px;font-size:11.5px;color:#f4f8fc;">C/C++</div>
<svg class="b" style="left:1015px;top:91px" width="16" height="16"><use href="#codegen"/></svg>
<div class="t" style="left:1033px;top:90px;height:18px;line-height:18px;font-size:11.5px;color:#e6e6e6;"><span style="display:inline-block;width:50.10px"><span style="display:inline-block;font-size:12.65px;transform:scaleX(0.7921);transform-origin:0 0">コード生成</span></span></div>
<svg class="b" style="left:1094px;top:91px" width="16" height="16"><use href="#bug"/></svg>
<div class="t" style="left:1113px;top:90px;height:18px;line-height:18px;font-size:11.5px;color:#e6e6e6;"><span style="display:inline-block;width:34.80px"><span style="display:inline-block;font-size:12.65px;transform:scaleX(0.6877);transform-origin:0 0">デバッグ</span></span></div>
<svg class="b" style="left:1161px;top:91px;" width="16" height="16" viewBox="0 0 16 16"><g fill="#c87a3a" stroke="#6a3a10" stroke-width=".6"><rect x="1" y="1" width="4" height="4"/><rect x="5" y="6" width="4" height="4"/><rect x="10" y="6" width="5" height="4"/><rect x="5" y="11" width="4" height="4"/><rect x="10" y="11" width="5" height="4"/></g></svg>
<div class="t" style="left:1180px;top:90px;height:18px;line-height:18px;font-size:11px;color:#e6e6e6;">CMSIS Packs</div>
<div class="b" style="left:0px;top:113px;width:462px;height:26px;background:#3c3c3c"></div>
<div class="b" style="left:2px;top:113px;width:176px;height:26px;background:#262626"></div>
<svg class="b" style="left:6px;top:118px;" width="16" height="16" viewBox="0 0 16 16"><path d="M.5 .5h7l2.5 2.5v9.5h-9.5z" fill="#f4f6fa" stroke="#b8a878"/><path d="M2 3h4M2 5h5M2 7h5M2 9h5" stroke="#4a78c8" stroke-width=".9"/><path d="M5.5 6.5h3l1 1h5.5v7.5h-9.5z" fill="url(#gfld)" stroke="#c0802a" stroke-width=".9"/></svg>
<div class="t" style="left:25px;top:117px;height:18px;line-height:18px;font-size:11.2px;color:#f0f0f0;"><span style="display:inline-block;width:124.95px"><span style="display:inline-block;font-size:12.32px;transform:scaleX(0.6762);transform-origin:0 0">プロジェクト・エクスプローラー</span></span></div>
<svg class="b" style="left:159px;top:120px;" width="12" height="12" viewBox="0 0 12 12"><path d="M1 1l10 10M11 1l-10 10" stroke="#e8e8e8" stroke-width="1"/></svg>
<svg class="b" style="left:183px;top:119px;" width="16" height="16" viewBox="0 0 16 16"><path d="M.5 .5h10v11h-10z" fill="#f4f4f4" stroke="#888"/><rect x="1" y="1" width="9" height="2" fill="#3c78c8"/><path d="M4.5 5.5h10v10h-10z" fill="#eef4fb" stroke="#b59a55"/><text x="9.5" y="14" font-size="8" font-family="Liberation Sans" font-weight="bold" fill="#2b5797" text-anchor="middle">C</text></svg>
<div class="t" style="left:201px;top:117px;height:18px;line-height:18px;font-size:11.5px;color:#a8a8a8;">C/C++ <span style="display:inline-block;width:52.20px"><span style="display:inline-block;font-size:12.65px;transform:scaleX(0.6877);transform-origin:0 0">プロジェクト</span></span></div>
<svg class="b" style="left:325px;top:119px;" width="16" height="16" viewBox="0 0 16 16"><rect x="1.5" y="1.5" width="11" height="11" fill="#b8d0f0" stroke="#7f9fcf"/><rect x="3.5" y="3.5" width="11" height="11" fill="#dce8f8" stroke="#8aa8d0"/><path d="M5.5 8.5h7" stroke="#1f4f9f" stroke-width="1.4"/></svg>
<svg class="b" style="left:346px;top:118px;" width="16" height="16" viewBox="0 0 16 16"><path d="M13 4.5H3M6 1.5l-3 3 3 3" fill="none" stroke="#e8a830" stroke-width="1.8"/><path d="M3 11.5h10M10 8.5l3 3-3 3" fill="none" stroke="#e8a830" stroke-width="1.8"/></svg>
<svg class="b" style="left:371px;top:118px;" width="16" height="16" viewBox="0 0 16 16"><path d="M1 1.5h14l-5 6v7l-3.5 1v-8z" fill="#dcefff" stroke="#8fbfe8"/><path d="M10 7.5v7" stroke="#8fbfe8"/></svg>
<svg class="b" style="left:399px;top:119px;" width="4" height="16" viewBox="0 0 4 16"><circle cx="2" cy="3" r="1.4" fill="#ddd"/><circle cx="2" cy="8" r="1.4" fill="#ddd"/><circle cx="2" cy="13" r="1.4" fill="#ddd"/></svg>
<div class="b" style="left:419px;top:121px;width:10px;height:4px;border:1px solid #c4c4c4;box-sizing:border-box"></div>
<div class="b" style="left:441px;top:121px;width:11px;height:10px;border:1px solid #bbb;border-top-width:2px;box-sizing:border-box"></div>
<div class="b" style="left:2px;top:139px;width:443px;height:876px;background:#2f2f2f"></div>
<div class="b" style="left:445px;top:139px;width:17px;height:876px;background:#f0f0f0"></div>
<div class="b" style="left:453px;top:156px;width:2px;height:808px;background:#7f7f7f"></div>
<div class="b" style="left:2px;top:1015px;width:460px;height:17px;background:#f0f0f0"></div>
<div class="b" style="left:19px;top:1023px;width:388px;height:2px;background:#7f7f7f"></div>
<div class="b" style="left:2px;top:139px;width:443px;height:876px;overflow:hidden">
<svg class="b" style="left:19px;top:1px" width="16" height="16"><use href="#fold"/></svg>
<div class="t" style="left:40px;top:0px;height:18px;line-height:18px;font-size:11.0px;color:#c0c0c0;">RL78G10Y16_CCRL_ondoshitudo_20221204</div>
<svg class="b" style="left:19px;top:19px" width="16" height="16"><use href="#fold"/></svg>
<div class="t" style="left:40px;top:18px;height:18px;line-height:18px;font-size:11.0px;color:#c0c0c0;">RL78G10Y16_PWMpowerpack20220803</div>
<svg class="b" style="left:19px;top:37px" width="16" height="16"><use href="#fold"/></svg>
<div class="t" style="left:40px;top:36px;height:18px;line-height:18px;font-size:11.0px;color:#c0c0c0;">RL78G10Y16_RCServo_20220526</div>
<svg class="b" style="left:19px;top:55px" width="16" height="16"><use href="#fold"/></svg>
<div class="t" style="left:40px;top:54px;height:18px;line-height:18px;font-size:11.0px;color:#c0c0c0;">RL78G10Y16_test_20220522_01</div>
<svg class="b" style="left:19px;top:73px" width="16" height="16"><use href="#fold"/></svg>
<div class="t" style="left:40px;top:72px;height:18px;line-height:18px;font-size:11.0px;color:#c0c0c0;">RL78G10Y47_IIC_S5851_20230106_01</div>
<svg class="b" style="left:19px;top:91px" width="16" height="16"><use href="#fold"/></svg>
<div class="t" style="left:40px;top:90px;height:18px;line-height:18px;font-size:11.0px;color:#c0c0c0;">RL78G10Y47_test_20220513_01</div>
<svg class="b" style="left:19px;top:109px" width="16" height="16"><use href="#fold"/></svg>
<div class="t" style="left:40px;top:108px;height:18px;line-height:18px;font-size:11.0px;color:#c0c0c0;">RL78G13_ADC_test_02</div>
<svg class="b" style="left:19px;top:127px" width="16" height="16"><use href="#fold"/></svg>
<div class="t" style="left:40px;top:126px;height:18px;line-height:18px;font-size:11.0px;color:#c0c0c0;">RL78G13_AQM1602_AM2320_ondo_shitudo_20230112</div>
<svg class="b" style="left:6px;top:149px" width="10" height="8"><use href="#chevd"/></svg>
<svg class="b" style="left:19px;top:145px" width="16" height="16"><use href="#projc"/></svg>
<div class="t" style="left:40px;top:144px;height:18px;line-height:18px;font-size:11.0px;color:#c0c0c0;">RL78G13_ondo_shitudo_20221213</div>
<svg class="b" style="left:23px;top:166px" width="8" height="10"><use href="#chevr"/></svg>
<svg class="b" style="left:35px;top:163px" width="16" height="16"><use href="#bin"/></svg>
<div class="t" style="left:56px;top:162px;height:18px;line-height:18px;font-size:11.0px;color:#c0c0c0;"><span style="display:inline-block;width:41.61px"><span style="display:inline-block;font-size:12.10px;transform:scaleX(0.6877);transform-origin:0 0">バイナリー</span></span></div>
<svg class="b" style="left:23px;top:184px" width="8" height="10"><use href="#chevr"/></svg>
<svg class="b" style="left:35px;top:181px" width="16" height="16"><use href="#inc"/></svg>
<div class="t" style="left:56px;top:180px;height:18px;line-height:18px;font-size:11.0px;color:#c0c0c0;">Includes</div>
<svg class="b" style="left:23px;top:202px" width="8" height="10"><use href="#chevr"/></svg>
<svg class="b" style="left:35px;top:199px" width="16" height="16"><use href="#srcf"/></svg>
<div class="t" style="left:56px;top:198px;height:18px;line-height:18px;font-size:11.0px;color:#c0c0c0;">generate</div>
<svg class="b" style="left:22px;top:221px" width="10" height="8"><use href="#chevd"/></svg>
<svg class="b" style="left:35px;top:217px" width="16" height="16"><use href="#srcfw"/></svg>
<div class="t" style="left:56px;top:216px;height:18px;line-height:18px;font-size:11.0px;color:#c0c0c0;">src</div>
<svg class="b" style="left:39px;top:238px" width="8" height="10"><use href="#chevr"/></svg>
<svg class="b" style="left:51px;top:235px" width="16" height="16"><use href="#fc"/></svg>
<div class="t" style="left:72px;top:234px;height:18px;line-height:18px;font-size:11.0px;color:#c0c0c0;">r_cg_cgc_user.c</div>
<svg class="b" style="left:39px;top:256px" width="8" height="10"><use href="#chevr"/></svg>
<svg class="b" style="left:51px;top:253px" width="16" height="16"><use href="#fc"/></svg>
<div class="t" style="left:72px;top:252px;height:18px;line-height:18px;font-size:11.0px;color:#c0c0c0;">r_cg_cgc.c</div>
<svg class="b" style="left:39px;top:274px" width="8" height="10"><use href="#chevr"/></svg>
<svg class="b" style="left:51px;top:271px" width="16" height="16"><use href="#fh"/></svg>
<div class="t" style="left:72px;top:270px;height:18px;line-height:18px;font-size:11.0px;color:#c0c0c0;">r_cg_cgc.h</div>
<svg class="b" style="left:39px;top:292px" width="8" height="10"><use href="#chevr"/></svg>
<svg class="b" style="left:51px;top:289px" width="16" height="16"><use href="#fh"/></svg>
<div class="t" style="left:72px;top:288px;height:18px;line-height:18px;font-size:11.0px;color:#c0c0c0;">r_cg_interrupt_handlers.h</div>
<svg class="b" style="left:39px;top:310px" width="8" height="10"><use href="#chevr"/></svg>
<svg class="b" style="left:51px;top:307px" width="16" height="16"><use href="#fh"/></svg>
<div class="t" style="left:72px;top:306px;height:18px;line-height:18px;font-size:11.0px;color:#c0c0c0;">r_cg_macrodriver.h</div>
<svg class="b" style="left:39px;top:328px" width="8" height="10"><use href="#chevr"/></svg>
<svg class="b" style="left:51px;top:325px" width="16" height="16"><use href="#fc"/></svg>
<div class="t" style="left:72px;top:324px;height:18px;line-height:18px;font-size:11.0px;color:#c0c0c0;">r_cg_port_user.c</div>
<svg class="b" style="left:39px;top:346px" width="8" height="10"><use href="#chevr"/></svg>
<svg class="b" style="left:51px;top:343px" width="16" height="16"><use href="#fc"/></svg>
<div class="t" style="left:72px;top:342px;height:18px;line-height:18px;font-size:11.0px;color:#c0c0c0;">r_cg_port.c</div>
<svg class="b" style="left:39px;top:364px" width="8" height="10"><use href="#chevr"/></svg>
<svg class="b" style="left:51px;top:361px" width="16" height="16"><use href="#fh"/></svg>
<div class="t" style="left:72px;top:360px;height:18px;line-height:18px;font-size:11.0px;color:#c0c0c0;">r_cg_port.h</div>
<svg class="b" style="left:39px;top:382px" width="8" height="10"><use href="#chevr"/></svg>
<svg class="b" style="left:51px;top:379px" width="16" height="16"><use href="#fc"/></svg>
<div class="t" style="left:72px;top:378px;height:18px;line-height:18px;font-size:11.0px;color:#c0c0c0;">r_cg_rtc_user.c</div>
<svg class="b" style="left:39px;top:400px" width="8" height="10"><use href="#chevr"/></svg>
<svg class="b" style="left:51px;top:397px" width="16" height="16"><use href="#fc"/></svg>
<div class="t" style="left:72px;top:396px;height:18px;line-height:18px;font-size:11.0px;color:#c0c0c0;">r_cg_rtc.c</div>
<svg class="b" style="left:39px;top:418px" width="8" height="10"><use href="#chevr"/></svg>
<svg class="b" style="left:51px;top:415px" width="16" height="16"><use href="#fh"/></svg>
<div class="t" style="left:72px;top:414px;height:18px;line-height:18px;font-size:11.0px;color:#c0c0c0;">r_cg_rtc.h</div>
<svg class="b" style="left:39px;top:436px" width="8" height="10"><use href="#chevr"/></svg>
<svg class="b" style="left:51px;top:433px" width="16" height="16"><use href="#fcw"/></svg>
<div class="t" style="left:72px;top:432px;height:18px;line-height:18px;font-size:11.0px;color:#c0c0c0;">r_cg_serial_user.c</div>
<svg class="b" style="left:39px;top:454px" width="8" height="10"><use href="#chevr"/></svg>
<svg class="b" style="left:51px;top:451px" width="16" height="16"><use href="#fc"/></svg>
<div class="t" style="left:72px;top:450px;height:18px;line-height:18px;font-size:11.0px;color:#c0c0c0;">r_cg_serial.c</div>
<svg class="b" style="left:39px;top:472px" width="8" height="10"><use href="#chevr"/></svg>
<svg class="b" style="left:51px;top:469px" width="16" height="16"><use href="#fh"/></svg>
<div class="t" style="left:72px;top:468px;height:18px;line-height:18px;font-size:11.0px;color:#c0c0c0;">r_cg_serial.h</div>
<svg class="b" style="left:39px;top:490px" width="8" height="10"><use href="#chevr"/></svg>
<svg class="b" style="left:51px;top:487px" width="16" height="16"><use href="#fh"/></svg>
<div class="t" style="left:72px;top:486px;height:18px;line-height:18px;font-size:11.0px;color:#c0c0c0;">r_cg_userdefine.h</div>
<svg class="b" style="left:39px;top:508px" width="8" height="10"><use href="#chevr"/></svg>
<svg class="b" style="left:51px;top:505px" width="16" height="16"><use href="#fc"/></svg>
<div class="t" style="left:72px;top:504px;height:18px;line-height:18px;font-size:11.0px;color:#c0c0c0;">r_cg_vector_table.c</div>
<svg class="b" style="left:39px;top:526px" width="8" height="10"><use href="#chevr"/></svg>
<svg class="b" style="left:51px;top:523px" width="16" height="16"><use href="#fc"/></svg>
<div class="t" style="left:72px;top:522px;height:18px;line-height:18px;font-size:11.0px;color:#c0c0c0;">r_hardware_setup.c</div>
<svg class="b" style="left:39px;top:544px" width="8" height="10"><use href="#chevr"/></svg>
<svg class="b" style="left:51px;top:541px" width="16" height="16"><use href="#fc"/></svg>
<div class="t" style="left:72px;top:540px;height:18px;line-height:18px;font-size:11.0px;color:#c0c0c0;">r_main.c</div>
<svg class="b" style="left:39px;top:562px" width="8" height="10"><use href="#chevr"/></svg>
<svg class="b" style="left:51px;top:559px" width="16" height="16"><use href="#fs"/></svg>
<div class="t" style="left:72px;top:558px;height:18px;line-height:18px;font-size:11.0px;color:#c0c0c0;">r_reset_program.asm</div>
<svg class="b" style="left:23px;top:580px" width="8" height="10"><use href="#chevr"/></svg>
<svg class="b" style="left:35px;top:577px" width="16" height="16"><use href="#hwf"/></svg>
<div class="t" style="left:56px;top:576px;height:18px;line-height:18px;font-size:11.0px;color:#c0c0c0;">HardwareDebug</div>
<svg class="b" style="left:35px;top:595px" width="16" height="16"><use href="#launch"/></svg>
<div class="t" style="left:56px;top:594px;height:18px;line-height:18px;font-size:11.0px;color:#c0c0c0;">RL78G13_ondo_shitudo_20221213 HardwareDebug.launch</div>
<svg class="b" style="left:22px;top:617px" width="10" height="8"><use href="#chevd"/></svg>
<svg class="b" style="left:35px;top:613px" width="16" height="16"><use href="#codegen"/></svg>
<div class="t" style="left:56px;top:612px;height:18px;line-height:18px;font-size:11.0px;color:#c0c0c0;"><span style="display:inline-block;width:47.92px"><span style="display:inline-block;font-size:12.10px;transform:scaleX(0.7921);transform-origin:0 0">コード生成</span></span></div>
<svg class="b" style="left:38px;top:635px" width="10" height="8"><use href="#chevd"/></svg>
<svg class="b" style="left:51px;top:631px" width="16" height="16"><use href="#periph"/></svg>
<div class="t" style="left:72px;top:630px;height:18px;line-height:18px;font-size:11.0px;color:#c0c0c0;"><span style="display:inline-block;width:45.91px"><span style="display:inline-block;font-size:12.10px;transform:scaleX(0.9486);transform-origin:0 0">周辺機能</span></span></div>
<svg class="b" style="left:67px;top:649px" width="16" height="16"><use href="#cubep"/></svg>
<div class="t" style="left:88px;top:648px;height:18px;line-height:18px;font-size:11.0px;color:#c0c0c0;"><span style="display:inline-block;width:79.20px"><span style="display:inline-block;font-size:12.10px;transform:scaleX(0.8182);transform-origin:0 0">クロック発生回路</span></span></div>
<div class="b" style="left:65px;top:666px;width:50px;height:18px;background:#282828"></div>
<svg class="b" style="left:67px;top:667px" width="16" height="16"><use href="#cubep"/></svg>
<div class="t" style="left:88px;top:666px;height:18px;line-height:18px;font-size:11.0px;color:#c0c0c0;"><span style="display:inline-block;width:24.97px"><span style="display:inline-block;font-size:12.10px;transform:scaleX(0.6877);transform-origin:0 0">ポート</span></span></div>
<svg class="b" style="left:67px;top:685px" width="16" height="16"><use href="#cube"/></svg>
<div class="t" style="left:88px;top:684px;height:18px;line-height:18px;font-size:11.0px;color:#c0c0c0;"><span style="display:inline-block;width:41.13px"><span style="display:inline-block;font-size:12.10px;transform:scaleX(0.8498);transform-origin:0 0">割り込み</span></span></div>
<svg class="b" style="left:67px;top:703px" width="16" height="16"><use href="#cubee"/></svg>
<div class="t" style="left:88px;top:702px;height:18px;line-height:18px;font-size:11.0px;color:#c0c0c0;"><span style="display:inline-block;width:33.29px"><span style="display:inline-block;font-size:12.10px;transform:scaleX(0.6877);transform-origin:0 0">シリアル</span></span></div>
<svg class="b" style="left:67px;top:721px" width="16" height="16"><use href="#cube"/></svg>
<div class="t" style="left:88px;top:720px;height:18px;line-height:18px;font-size:11.0px;color:#c0c0c0;">A/D<span style="display:inline-block;width:41.61px"><span style="display:inline-block;font-size:12.10px;transform:scaleX(0.6877);transform-origin:0 0">コンバータ</span></span></div>
<svg class="b" style="left:67px;top:739px" width="16" height="16"><use href="#cube"/></svg>
<div class="t" style="left:88px;top:738px;height:18px;line-height:18px;font-size:11.0px;color:#c0c0c0;"><span style="display:inline-block;width:24.97px"><span style="display:inline-block;font-size:12.10px;transform:scaleX(0.6877);transform-origin:0 0">タイマ</span></span></div>
<svg class="b" style="left:67px;top:757px" width="16" height="16"><use href="#cube"/></svg>
<div class="t" style="left:88px;top:756px;height:18px;line-height:18px;font-size:11.0px;color:#c0c0c0;"><span style="display:inline-block;width:89.43px"><span style="display:inline-block;font-size:12.10px;transform:scaleX(0.6719);transform-origin:0 0">ウォッチドッグ・タイマ</span></span></div>
<svg class="b" style="left:67px;top:775px" width="16" height="16"><use href="#cubep"/></svg>
<div class="t" style="left:88px;top:774px;height:18px;line-height:18px;font-size:11.0px;color:#c0c0c0;"><span style="display:inline-block;width:89.43px"><span style="display:inline-block;font-size:12.10px;transform:scaleX(0.6719);transform-origin:0 0">リアルタイム・クロック</span></span></div>
<svg class="b" style="left:67px;top:793px" width="16" height="16"><use href="#cube"/></svg>
<div class="t" style="left:88px;top:792px;height:18px;line-height:18px;font-size:11.0px;color:#c0c0c0;">12<span style="display:inline-block;width:112.30px"><span style="display:inline-block;font-size:12.10px;transform:scaleX(0.6629);transform-origin:0 0">ビット・インターバル・タイマ</span></span></div>
<svg class="b" style="left:67px;top:811px" width="16" height="16"><use href="#cube"/></svg>
<div class="t" style="left:88px;top:810px;height:18px;line-height:18px;font-size:11.0px;color:#c0c0c0;"><span style="display:inline-block;width:56.24px"><span style="display:inline-block;font-size:12.10px;transform:scaleX(0.7747);transform-origin:0 0">クロック出力</span></span>/<span style="display:inline-block;width:47.92px"><span style="display:inline-block;font-size:12.10px;transform:scaleX(0.7921);transform-origin:0 0">ブザー出力</span></span></div>
<svg class="b" style="left:67px;top:829px" width="16" height="16"><use href="#cube"/></svg>
<div class="t" style="left:88px;top:828px;height:18px;line-height:18px;font-size:11.0px;color:#c0c0c0;">DMA<span style="display:inline-block;width:49.93px"><span style="display:inline-block;font-size:12.10px;transform:scaleX(0.6877);transform-origin:0 0">コントローラ</span></span></div>
<svg class="b" style="left:67px;top:847px" width="16" height="16"><use href="#cube"/></svg>
<div class="t" style="left:88px;top:846px;height:18px;line-height:18px;font-size:11.0px;color:#c0c0c0;"><span style="display:inline-block;width:68.87px"><span style="display:inline-block;font-size:12.10px;transform:scaleX(0.9486);transform-origin:0 0">電圧検出回路</span></span></div>
<svg class="b" style="left:39px;top:868px" width="8" height="10"><use href="#chevr"/></svg>
<svg class="b" style="left:51px;top:865px" width="16" height="16"><use href="#cpreview"/></svg>
<div class="t" style="left:72px;top:864px;height:18px;line-height:18px;font-size:11.0px;color:#c0c0c0;"><span style="display:inline-block;width:72.79px"><span style="display:inline-block;font-size:12.10px;transform:scaleX(0.6684);transform-origin:0 0">コード・プレビュー</span></span></div>
</div>
<div class="b" style="left:468px;top:113px;width:766px;height:26px;background:#3c3c3c"></div>
<div class="b" style="left:737px;top:113px;width:87px;height:26px;background:#262626"></div>
<div class="b" style="left:737px;top:136px;width:87px;height:3px;background:#3a7ab8"></div>
<svg class="b" style="left:473px;top:118px;" width="16" height="17" viewBox="0 0 16 17"><rect x="1" y="1" width="13" height="14" fill="#e8eef8" stroke="#9ab"/><circle cx="6" cy="5" r="3" fill="#e02020"/><path d="M9 1v14M1 8h13" stroke="#9ab"/><path d="M1 16l3.5-6 3.5 6z" fill="#f5c542"/></svg>
<div class="t" style="left:492px;top:118px;height:18px;line-height:18px;font-size:11.5px;color:#d8d8d8;"><span style="display:inline-block;width:24.00px"><span style="display:inline-block;font-size:12.65px;transform:scaleX(0.9486);transform-origin:0 0">問題</span></span></div>
<svg class="b" style="left:527px;top:119px;" width="14" height="15" viewBox="0 0 14 15"><rect x="1" y="1" width="12" height="10" fill="#3a6ab8" stroke="#224a98"/><rect x="3" y="3" width="8" height="6" fill="#e8f0fb"/><rect x="3" y="12" width="8" height="2" fill="#3a6ab8"/></svg>
<div class="t" style="left:544px;top:118px;height:18px;line-height:18px;font-size:11.5px;color:#d8d8d8;"><span style="display:inline-block;width:26.10px"><span style="display:inline-block;font-size:12.65px;transform:scaleX(0.6877);transform-origin:0 0">コンソ</span></span>...</div>
<svg class="b" style="left:596px;top:118px;" width="17" height="17" viewBox="0 0 17 17"><circle cx="7" cy="7" r="6" fill="#5aa8d8" stroke="#2a6898"/><path d="M3 5q3-2 6 1t3 5" fill="#6ac060"/><path d="M8 16l6-7 2 2-6 6z" fill="#f0c040"/></svg>
<div class="t" style="left:615px;top:118px;height:18px;line-height:18px;font-size:11.5px;color:#d8d8d8;"><span style="display:inline-block;width:26.10px"><span style="display:inline-block;font-size:12.65px;transform:scaleX(0.6877);transform-origin:0 0">スマー</span></span>...</div>
<svg class="b" style="left:668px;top:118px;" width="17" height="17" viewBox="0 0 17 17"><rect x="1" y="1" width="7" height="9" fill="#e0e0e0" stroke="#888"/><rect x="7" y="3" width="6" height="9" fill="#c8d8e8" stroke="#888"/><path d="M8 16l6-7 2 2-6 6z" fill="#f0c040"/></svg>
<div class="t" style="left:687px;top:118px;height:18px;line-height:18px;font-size:11.5px;color:#d8d8d8;"><span style="display:inline-block;width:26.10px"><span style="display:inline-block;font-size:12.65px;transform:scaleX(0.6877);transform-origin:0 0">スマー</span></span>...</div>
<svg class="b" style="left:741px;top:118px" width="16" height="16"><use href="#periph"/></svg>
<div class="t" style="left:760px;top:118px;height:18px;line-height:18px;font-size:11.5px;color:#e8e8e8;">*<span style="display:inline-block;width:24.00px"><span style="display:inline-block;font-size:12.65px;transform:scaleX(0.9486);transform-origin:0 0">周辺</span></span>...</div>
<svg class="b" style="left:829px;top:118px" width="16" height="16"><use href="#bug"/></svg>
<div class="t" style="left:847px;top:118px;height:18px;line-height:18px;font-size:11.5px;color:#d8d8d8;"><span style="display:inline-block;width:34.80px"><span style="display:inline-block;font-size:12.65px;transform:scaleX(0.6877);transform-origin:0 0">デバッグ</span></span></div>
<svg class="b" style="left:894px;top:118px" width="16" height="16"><use href="#periph"/></svg>
<div class="t" style="left:914px;top:118px;height:18px;line-height:18px;font-size:11.5px;color:#d8d8d8;"><span style="display:inline-block;width:36.00px"><span style="display:inline-block;font-size:12.65px;transform:scaleX(0.9486);transform-origin:0 0">端子配</span></span>...</div>
<svg class="b" style="left:967px;top:118px" width="16" height="16"><use href="#periph"/></svg>
<div class="t" style="left:988px;top:118px;height:18px;line-height:18px;font-size:11.5px;color:#d8d8d8;"><span style="display:inline-block;width:36.00px"><span style="display:inline-block;font-size:12.65px;transform:scaleX(0.9486);transform-origin:0 0">端子配</span></span>...</div>
<svg class="b" style="left:1042px;top:118px" width="16" height="16"><use href="#cpreview"/></svg>
<div class="t" style="left:1062px;top:118px;height:18px;line-height:18px;font-size:11.5px;color:#d8d8d8;"><span style="display:inline-block;width:32.60px"><span style="display:inline-block;font-size:12.65px;transform:scaleX(0.6443);transform-origin:0 0">コード・</span></span>...</div>
<svg class="b" style="left:1117px;top:119px;" width="12" height="16" viewBox="0 0 12 16"><rect x="1.5" y="1.5" width="9" height="13" rx="3" fill="#6a9ad8" stroke="#3a6ab8"/><path d="M4 4v8M7 4v8" stroke="#c8dcf4"/></svg>
<div class="t" style="left:1131px;top:118px;height:18px;line-height:18px;font-size:11.5px;color:#d8d8d8;"><span style="display:inline-block;width:34.80px"><span style="display:inline-block;font-size:12.65px;transform:scaleX(0.6877);transform-origin:0 0">メモリー</span></span></div>
<svg class="b" style="left:805px;top:120px;" width="12" height="12" viewBox="0 0 12 12"><path d="M1 1l10 10M11 1l-10 10" stroke="#e8e8e8" stroke-width="1"/></svg>
<div class="b" style="left:1192px;top:121px;width:10px;height:4px;border:1px solid #c4c4c4;box-sizing:border-box"></div>
<div class="b" style="left:1213px;top:121px;width:11px;height:10px;border:1px solid #bbb;border-top-width:2px;box-sizing:border-box"></div>
<div class="b" style="left:468px;top:139px;width:766px;height:22px;background:#262626"></div>
<svg class="b" style="left:1090px;top:142px;" width="16" height="17" viewBox="0 0 16 17"><rect x="1.5" y="1.5" width="12" height="14" fill="#e7eef8" stroke="#7f95b8"/><path d="M4 4h7M4 6h7" stroke="#334" stroke-width=".8" stroke-dasharray="1 1"/><circle cx="3.5" cy="3.5" r="3" fill="#fff" stroke="#3d5fa8"/><circle cx="9" cy="11" r="4.5" fill="#2fa850"/><path d="M7.5 8.5v5l4-2.5z" fill="#fff"/></svg>
<div class="t" style="left:1108px;top:141px;height:18px;line-height:18px;font-size:11.3px;color:#e8e8e8;"><span style="display:inline-block;width:77.23px"><span style="display:inline-block;font-size:12.43px;transform:scaleX(0.7767);transform-origin:0 0">コードを生成する</span></span></div>
<svg class="b" style="left:1190px;top:142px;" width="17" height="17" viewBox="0 0 17 17"><path d="M3.5 1.5h9l3 3v11h-12z" fill="#f4e8c8" stroke="#b59a55"/><circle cx="8" cy="9" r="5" fill="#3a8ad8"/><path d="M5 7q3 2 6 0" stroke="#8ac8f8" fill="none"/></svg>
<svg class="b" style="left:1220px;top:142px;" width="4" height="16" viewBox="0 0 4 16"><circle cx="2" cy="3" r="1.4" fill="#eee"/><circle cx="2" cy="8" r="1.4" fill="#eee"/><circle cx="2" cy="13" r="1.4" fill="#eee"/></svg>
<div class="b" style="left:468px;top:161px;width:766px;height:871px;background:#f0f0f0"></div>
<div class="b" style="left:468px;top:183px;width:547px;height:1px;background:#e6e6e6"></div>
<div class="b" style="left:469px;top:163px;width:48px;height:21px;background:#f0f0f0;border:1px solid #e4e4e4;border-bottom:none;box-sizing:border-box"></div>
<div class="t" style="left:469px;top:164px;height:19px;line-height:19px;font-size:11.3px;color:#000;width:48px;text-align:center"><span style="display:inline-block;width:25.65px"><span style="display:inline-block;font-size:12.43px;transform:scaleX(0.6877);transform-origin:0 0">ポート</span></span>0</div>
<div class="b" style="left:517px;top:163px;width:49px;height:21px;background:#f0f0f0;border:1px solid #e4e4e4;border-bottom:none;box-sizing:border-box"></div>
<div class="t" style="left:517px;top:164px;height:19px;line-height:19px;font-size:11.3px;color:#000;width:49px;text-align:center"><span style="display:inline-block;width:25.65px"><span style="display:inline-block;font-size:12.43px;transform:scaleX(0.6877);transform-origin:0 0">ポート</span></span>1</div>
<div class="b" style="left:567px;top:161px;width:48px;height:23px;background:#f9f9f9;border:1px solid #dadada;border-bottom:none;box-sizing:border-box"></div>
<div class="b" style="left:568px;top:163px;width:45px;height:20px;border:1px dotted #222;box-sizing:border-box"></div>
<div class="t" style="left:567px;top:163px;height:19px;line-height:19px;font-size:11.3px;color:#000;width:48px;text-align:center"><span style="display:inline-block;width:25.65px"><span style="display:inline-block;font-size:12.43px;transform:scaleX(0.6877);transform-origin:0 0">ポート</span></span>2</div>
<div class="b" style="left:574px;top:177px;width:34px;height:1px;background:#000"></div>
<div class="b" style="left:615px;top:163px;width:48px;height:21px;background:#f0f0f0;border:1px solid #e4e4e4;border-bottom:none;box-sizing:border-box"></div>
<div class="t" style="left:615px;top:164px;height:19px;line-height:19px;font-size:11.3px;color:#000;width:48px;text-align:center"><span style="display:inline-block;width:25.65px"><span style="display:inline-block;font-size:12.43px;transform:scaleX(0.6877);transform-origin:0 0">ポート</span></span>3</div>
<div class="b" style="left:663px;top:163px;width:48px;height:21px;background:#f0f0f0;border:1px solid #e4e4e4;border-bottom:none;box-sizing:border-box"></div>
<div class="t" style="left:663px;top:164px;height:19px;line-height:19px;font-size:11.3px;color:#000;width:48px;text-align:center"><span style="display:inline-block;width:25.65px"><span style="display:inline-block;font-size:12.43px;transform:scaleX(0.6877);transform-origin:0 0">ポート</span></span>4</div>
<div class="b" style="left:711px;top:163px;width:48px;height:21px;background:#f0f0f0;border:1px solid #e4e4e4;border-bottom:none;box-sizing:border-box"></div>
<div class="t" style="left:711px;top:164px;height:19px;line-height:19px;font-size:11.3px;color:#000;width:48px;text-align:center"><span style="display:inline-block;width:25.65px"><span style="display:inline-block;font-size:12.43px;transform:scaleX(0.6877);transform-origin:0 0">ポート</span></span>5</div>
<div class="b" style="left:759px;top:163px;width:48px;height:21px;background:#f0f0f0;border:1px solid #e4e4e4;border-bottom:none;box-sizing:border-box"></div>
<div class="t" style="left:759px;top:164px;height:19px;line-height:19px;font-size:11.3px;color:#000;width:48px;text-align:center"><span style="display:inline-block;width:25.65px"><span style="display:inline-block;font-size:12.43px;transform:scaleX(0.6877);transform-origin:0 0">ポート</span></span>6</div>
<div class="b" style="left:807px;top:163px;width:48px;height:21px;background:#f0f0f0;border:1px solid #e4e4e4;border-bottom:none;box-sizing:border-box"></div>
<div class="t" style="left:807px;top:164px;height:19px;line-height:19px;font-size:11.3px;color:#000;width:48px;text-align:center"><span style="display:inline-block;width:25.65px"><span style="display:inline-block;font-size:12.43px;transform:scaleX(0.6877);transform-origin:0 0">ポート</span></span>7</div>
<div class="b" style="left:855px;top:163px;width:53px;height:21px;background:#f0f0f0;border:1px solid #e4e4e4;border-bottom:none;box-sizing:border-box"></div>
<div class="t" style="left:855px;top:164px;height:19px;line-height:19px;font-size:11.3px;color:#000;width:53px;text-align:center"><span style="display:inline-block;width:25.65px"><span style="display:inline-block;font-size:12.43px;transform:scaleX(0.6877);transform-origin:0 0">ポート</span></span>12</div>
<div class="b" style="left:908px;top:163px;width:54px;height:21px;background:#f0f0f0;border:1px solid #e4e4e4;border-bottom:none;box-sizing:border-box"></div>
<div class="t" style="left:908px;top:164px;height:19px;line-height:19px;font-size:11.3px;color:#000;width:54px;text-align:center"><span style="display:inline-block;width:25.65px"><span style="display:inline-block;font-size:12.43px;transform:scaleX(0.6877);transform-origin:0 0">ポート</span></span>13</div>
<div class="b" style="left:962px;top:163px;width:53px;height:21px;background:#f0f0f0;border:1px solid #e4e4e4;border-bottom:none;box-sizing:border-box"></div>
<div class="t" style="left:962px;top:164px;height:19px;line-height:19px;font-size:11.3px;color:#000;width:53px;text-align:center"><span style="display:inline-block;width:25.65px"><span style="display:inline-block;font-size:12.43px;transform:scaleX(0.6877);transform-origin:0 0">ポート</span></span>14</div>
<div class="b" style="left:470px;top:193px;width:5px;height:1px;background:#a0a0a0"></div>
<div class="b" style="left:501px;top:193px;width:733px;height:1px;background:#a0a0a0"></div>
<div class="b" style="left:501px;top:194px;width:733px;height:1px;background:#ffffff"></div>
<div class="t" style="left:477px;top:182px;height:18px;line-height:18px;font-size:11px;color:#000;">P20</div>
<svg class="b" style="left:493px;top:206px" width="14" height="14"><use href="#radioon"/></svg>
<div class="t" style="left:510px;top:204px;height:18px;line-height:18px;font-size:11.5px;color:#000;font-size:12px;letter-spacing:-1.1px">使用しない</div>
<svg class="b" style="left:596px;top:206px" width="14" height="14"><use href="#radiooff"/></svg>
<div class="t" style="left:614px;top:204px;height:18px;line-height:18px;font-size:11.3px;color:#000;"><span style="display:inline-block;width:23.58px"><span style="display:inline-block;font-size:12.43px;transform:scaleX(0.9486);transform-origin:0 0">入力</span></span></div>
<svg class="b" style="left:663px;top:206px" width="14" height="14"><use href="#radiooff"/></svg>
<div class="t" style="left:680px;top:204px;height:18px;line-height:18px;font-size:11.3px;color:#000;"><span style="display:inline-block;width:23.58px"><span style="display:inline-block;font-size:12.43px;transform:scaleX(0.9486);transform-origin:0 0">出力</span></span></div>
<svg class="b" style="left:1037px;top:207px" width="13" height="13"><use href="#chk"/></svg>
<div class="t" style="left:1055px;top:202px;height:18px;line-height:18px;font-size:10.5px;color:#999999;">1</div>
<div class="b" style="left:470px;top:233px;width:5px;height:1px;background:#a0a0a0"></div>
<div class="b" style="left:501px;top:233px;width:733px;height:1px;background:#a0a0a0"></div>
<div class="b" style="left:501px;top:234px;width:733px;height:1px;background:#ffffff"></div>
<div class="t" style="left:477px;top:222px;height:18px;line-height:18px;font-size:11px;color:#000;">P21</div>
<svg class="b" style="left:493px;top:246px" width="14" height="14"><use href="#radioon"/></svg>
<div class="t" style="left:510px;top:244px;height:18px;line-height:18px;font-size:11.5px;color:#000;font-size:12px;letter-spacing:-1.1px">使用しない</div>
<svg class="b" style="left:596px;top:246px" width="14" height="14"><use href="#radiooff"/></svg>
<div class="t" style="left:614px;top:244px;height:18px;line-height:18px;font-size:11.3px;color:#000;"><span style="display:inline-block;width:23.58px"><span style="display:inline-block;font-size:12.43px;transform:scaleX(0.9486);transform-origin:0 0">入力</span></span></div>
<svg class="b" style="left:663px;top:246px" width="14" height="14"><use href="#radiooff"/></svg>
<div class="t" style="left:680px;top:244px;height:18px;line-height:18px;font-size:11.3px;color:#000;"><span style="display:inline-block;width:23.58px"><span style="display:inline-block;font-size:12.43px;transform:scaleX(0.9486);transform-origin:0 0">出力</span></span></div>
<svg class="b" style="left:1037px;top:247px" width="13" height="13"><use href="#chk"/></svg>
<div class="t" style="left:1055px;top:242px;height:18px;line-height:18px;font-size:10.5px;color:#999999;">1</div>
<div class="b" style="left:470px;top:273px;width:5px;height:1px;background:#a0a0a0"></div>
<div class="b" style="left:501px;top:273px;width:733px;height:1px;background:#a0a0a0"></div>
<div class="b" style="left:501px;top:274px;width:733px;height:1px;background:#ffffff"></div>
<div class="t" style="left:477px;top:262px;height:18px;line-height:18px;font-size:11px;color:#000;">P22</div>
<svg class="b" style="left:493px;top:286px" width="14" height="14"><use href="#radioon"/></svg>
<div class="t" style="left:510px;top:284px;height:18px;line-height:18px;font-size:11.5px;color:#000;font-size:12px;letter-spacing:-1.1px">使用しない</div>
<svg class="b" style="left:596px;top:286px" width="14" height="14"><use href="#radiooff"/></svg>
<div class="t" style="left:614px;top:284px;height:18px;line-height:18px;font-size:11.3px;color:#000;"><span style="display:inline-block;width:23.58px"><span style="display:inline-block;font-size:12.43px;transform:scaleX(0.9486);transform-origin:0 0">入力</span></span></div>
<svg class="b" style="left:663px;top:286px" width="14" height="14"><use href="#radiooff"/></svg>
<div class="t" style="left:680px;top:284px;height:18px;line-height:18px;font-size:11.3px;color:#000;"><span style="display:inline-block;width:23.58px"><span style="display:inline-block;font-size:12.43px;transform:scaleX(0.9486);transform-origin:0 0">出力</span></span></div>
<svg class="b" style="left:1037px;top:287px" width="13" height="13"><use href="#chk"/></svg>
<div class="t" style="left:1055px;top:282px;height:18px;line-height:18px;font-size:10.5px;color:#999999;">1</div>
<div class="b" style="left:470px;top:313px;width:5px;height:1px;background:#a0a0a0"></div>
<div class="b" style="left:501px;top:313px;width:733px;height:1px;background:#a0a0a0"></div>
<div class="b" style="left:501px;top:314px;width:733px;height:1px;background:#ffffff"></div>
<div class="t" style="left:477px;top:302px;height:18px;line-height:18px;font-size:11px;color:#000;">P23</div>
<svg class="b" style="left:493px;top:326px" width="14" height="14"><use href="#radioon"/></svg>
<div class="t" style="left:510px;top:324px;height:18px;line-height:18px;font-size:11.5px;color:#000;font-size:12px;letter-spacing:-1.1px">使用しない</div>
<svg class="b" style="left:596px;top:326px" width="14" height="14"><use href="#radiooff"/></svg>
<div class="t" style="left:614px;top:324px;height:18px;line-height:18px;font-size:11.3px;color:#000;"><span style="display:inline-block;width:23.58px"><span style="display:inline-block;font-size:12.43px;transform:scaleX(0.9486);transform-origin:0 0">入力</span></span></div>
<svg class="b" style="left:663px;top:326px" width="14" height="14"><use href="#radiooff"/></svg>
<div class="t" style="left:680px;top:324px;height:18px;line-height:18px;font-size:11.3px;color:#000;"><span style="display:inline-block;width:23.58px"><span style="display:inline-block;font-size:12.43px;transform:scaleX(0.9486);transform-origin:0 0">出力</span></span></div>
<svg class="b" style="left:1037px;top:327px" width="13" height="13"><use href="#chk"/></svg>
<div class="t" style="left:1055px;top:322px;height:18px;line-height:18px;font-size:10.5px;color:#999999;">1</div>
<div class="b" style="left:470px;top:353px;width:5px;height:1px;background:#a0a0a0"></div>
<div class="b" style="left:501px;top:353px;width:733px;height:1px;background:#a0a0a0"></div>
<div class="b" style="left:501px;top:354px;width:733px;height:1px;background:#ffffff"></div>
<div class="t" style="left:477px;top:342px;height:18px;line-height:18px;font-size:11px;color:#000;">P24</div>
<svg class="b" style="left:493px;top:366px" width="14" height="14"><use href="#radioon"/></svg>
<div class="t" style="left:510px;top:364px;height:18px;line-height:18px;font-size:11.5px;color:#000;font-size:12px;letter-spacing:-1.1px">使用しない</div>
<svg class="b" style="left:596px;top:366px" width="14" height="14"><use href="#radiooff"/></svg>
<div class="t" style="left:614px;top:364px;height:18px;line-height:18px;font-size:11.3px;color:#000;"><span style="display:inline-block;width:23.58px"><span style="display:inline-block;font-size:12.43px;transform:scaleX(0.9486);transform-origin:0 0">入力</span></span></div>
<svg class="b" style="left:663px;top:366px" width="14" height="14"><use href="#radiooff"/></svg>
<div class="t" style="left:680px;top:364px;height:18px;line-height:18px;font-size:11.3px;color:#000;"><span style="display:inline-block;width:23.58px"><span style="display:inline-block;font-size:12.43px;transform:scaleX(0.9486);transform-origin:0 0">出力</span></span></div>
<svg class="b" style="left:1037px;top:367px" width="13" height="13"><use href="#chk"/></svg>
<div class="t" style="left:1055px;top:362px;height:18px;line-height:18px;font-size:10.5px;color:#999999;">1</div>
<div class="b" style="left:470px;top:393px;width:5px;height:1px;background:#a0a0a0"></div>
<div class="b" style="left:501px;top:393px;width:733px;height:1px;background:#a0a0a0"></div>
<div class="b" style="left:501px;top:394px;width:733px;height:1px;background:#ffffff"></div>
<div class="t" style="left:477px;top:382px;height:18px;line-height:18px;font-size:11px;color:#000;">P25</div>
<svg class="b" style="left:493px;top:406px" width="14" height="14"><use href="#radioon"/></svg>
<div class="t" style="left:510px;top:404px;height:18px;line-height:18px;font-size:11.5px;color:#000;font-size:12px;letter-spacing:-1.1px">使用しない</div>
<svg class="b" style="left:596px;top:406px" width="14" height="14"><use href="#radiooff"/></svg>
<div class="t" style="left:614px;top:404px;height:18px;line-height:18px;font-size:11.3px;color:#000;"><span style="display:inline-block;width:23.58px"><span style="display:inline-block;font-size:12.43px;transform:scaleX(0.9486);transform-origin:0 0">入力</span></span></div>
<svg class="b" style="left:663px;top:406px" width="14" height="14"><use href="#radiooff"/></svg>
<div class="t" style="left:680px;top:404px;height:18px;line-height:18px;font-size:11.3px;color:#000;"><span style="display:inline-block;width:23.58px"><span style="display:inline-block;font-size:12.43px;transform:scaleX(0.9486);transform-origin:0 0">出力</span></span></div>
<svg class="b" style="left:1037px;top:407px" width="13" height="13"><use href="#chk"/></svg>
<div class="t" style="left:1055px;top:402px;height:18px;line-height:18px;font-size:10.5px;color:#999999;">1</div>
<div class="b" style="left:470px;top:433px;width:5px;height:1px;background:#a0a0a0"></div>
<div class="b" style="left:501px;top:433px;width:733px;height:1px;background:#a0a0a0"></div>
<div class="b" style="left:501px;top:434px;width:733px;height:1px;background:#ffffff"></div>
<div class="t" style="left:477px;top:422px;height:18px;line-height:18px;font-size:11px;color:#000;">P26</div>
<svg class="b" style="left:493px;top:446px" width="14" height="14"><use href="#radioon"/></svg>
<div class="t" style="left:510px;top:444px;height:18px;line-height:18px;font-size:11.5px;color:#000;font-size:12px;letter-spacing:-1.1px">使用しない</div>
<svg class="b" style="left:596px;top:446px" width="14" height="14"><use href="#radiooff"/></svg>
<div class="t" style="left:614px;top:444px;height:18px;line-height:18px;font-size:11.3px;color:#000;"><span style="display:inline-block;width:23.58px"><span style="display:inline-block;font-size:12.43px;transform:scaleX(0.9486);transform-origin:0 0">入力</span></span></div>
<svg class="b" style="left:663px;top:446px" width="14" height="14"><use href="#radiooff"/></svg>
<div class="t" style="left:680px;top:444px;height:18px;line-height:18px;font-size:11.3px;color:#000;"><span style="display:inline-block;width:23.58px"><span style="display:inline-block;font-size:12.43px;transform:scaleX(0.9486);transform-origin:0 0">出力</span></span></div>
<svg class="b" style="left:1037px;top:447px" width="13" height="13"><use href="#chk"/></svg>
<div class="t" style="left:1055px;top:442px;height:18px;line-height:18px;font-size:10.5px;color:#999999;">1</div>
<div class="b" style="left:470px;top:473px;width:5px;height:1px;background:#a0a0a0"></div>
<div class="b" style="left:501px;top:473px;width:733px;height:1px;background:#a0a0a0"></div>
<div class="b" style="left:501px;top:474px;width:733px;height:1px;background:#ffffff"></div>
<div class="t" style="left:477px;top:462px;height:18px;line-height:18px;font-size:11px;color:#000;">P27</div>
<svg class="b" style="left:493px;top:486px" width="14" height="14"><use href="#radioon"/></svg>
<div class="t" style="left:510px;top:484px;height:18px;line-height:18px;font-size:11.5px;color:#000;font-size:12px;letter-spacing:-1.1px">使用しない</div>
<svg class="b" style="left:596px;top:486px" width="14" height="14"><use href="#radiooff"/></svg>
<div class="t" style="left:614px;top:484px;height:18px;line-height:18px;font-size:11.3px;color:#000;"><span style="display:inline-block;width:23.58px"><span style="display:inline-block;font-size:12.43px;transform:scaleX(0.9486);transform-origin:0 0">入力</span></span></div>
<svg class="b" style="left:663px;top:486px" width="14" height="14"><use href="#radiooff"/></svg>
<div class="t" style="left:680px;top:484px;height:18px;line-height:18px;font-size:11.3px;color:#000;"><span style="display:inline-block;width:23.58px"><span style="display:inline-block;font-size:12.43px;transform:scaleX(0.9486);transform-origin:0 0">出力</span></span></div>
<svg class="b" style="left:1037px;top:487px" width="13" height="13"><use href="#chk"/></svg>
<div class="t" style="left:1055px;top:482px;height:18px;line-height:18px;font-size:10.5px;color:#999999;">1</div>
<div class="b" style="left:468px;top:1013px;width:766px;height:1px;background:#e2e2e2"></div>
<div class="b" style="left:468px;top:1014px;width:766px;height:1px;background:#ffffff"></div>
<div class="b" style="left:485px;top:1023px;width:590px;height:2px;background:#7f7f7f"></div>
<div class="b" style="left:1234px;top:113px;width:25px;height:920px;background:#515658"></div>
<svg class="b" style="left:1240px;top:115px;" width="14" height="4" viewBox="0 0 14 4"><g fill="#9a9a9a"><rect x="0" y="0" width="2" height="2"/><rect x="4" y="0" width="2" height="2"/><rect x="8" y="0" width="2" height="2"/><rect x="12" y="0" width="2" height="2"/></g></svg>
<svg class="b" style="left:1242px;top:125px;" width="13" height="10" viewBox="0 0 13 10"><rect x="3.5" y=".5" width="8" height="5" fill="none" stroke="#6f6a60"/><rect x=".5" y="3.5" width="8" height="5" fill="#515658" stroke="#6f6a60"/></svg>
<svg class="b" style="left:1240px;top:145px;" width="13" height="12" viewBox="0 0 13 12"><rect x=".5" y=".5" width="12" height="11" fill="#f4f8fc" stroke="#c8a860"/><rect x="1" y="1" width="11" height="1.5" fill="#5a90d8"/><path d="M4.5 2.5v9" stroke="#c8a860"/></svg>
<div class="b" style="left:1px;top:1035px;width:110px;height:18px;background:#008000"></div>
<div class="t" style="left:19px;top:1035px;height:18px;line-height:18px;font-size:11.5px;color:#ffffff;"><span style="display:inline-block;width:36.00px"><span style="display:inline-block;font-size:12.65px;transform:scaleX(0.9486);transform-origin:0 0">実行中</span></span></div>
<svg class="b" style="left:115px;top:1036px;" width="18" height="16" viewBox="0 0 18 16"><path d="M1 4.7H10V1L17 8 10 15V10.9H1z" fill="#fcc820"/></svg>
<div class="t" style="left:143px;top:1034px;height:18px;line-height:18px;font-size:11px;color:#c4c4c4;letter-spacing:1.35px">---------------</div>
<svg class="b" style="left:302px;top:1035px;" width="16" height="17" viewBox="0 0 16 17"><circle cx="8" cy="9.5" r="6.5" fill="#f4f4f4" stroke="#333" stroke-width="1.3"/><path d="M8 9.5l3-4" stroke="#d02020" stroke-width="1.2"/><rect x="6" y="0.5" width="4" height="2" fill="#333"/></svg>
<div class="t" style="left:329px;top:1034px;height:18px;line-height:18px;font-size:11px;color:#c4c4c4;letter-spacing:1.35px">---------------</div>
<svg class="b" style="left:450px;top:1036px;" width="16" height="16" viewBox="0 0 16 16"><circle cx="8" cy="8" r="7" fill="#3a8ee8" stroke="#8ac4ff"/><rect x="7" y="6.5" width="2" height="6" fill="#fff"/><circle cx="8" cy="4.3" r="1.2" fill="#fff"/></svg>
<div class="t" style="left:477px;top:1034px;height:18px;line-height:18px;font-size:11px;color:#c4c4c4;letter-spacing:1.35px">---------------</div>
<div class="b" style="left:936px;top:1034px;width:1px;height:21px;background:#e6e6e6"></div>
<div class="t" style="left:943px;top:1035px;height:18px;line-height:18px;font-size:11.3px;color:#e8e8e8;">RL78G13_ondo_shitudo_...221213/<span style="display:inline-block;width:49.23px"><span style="display:inline-block;font-size:12.43px;transform:scaleX(0.7921);transform-origin:0 0">コード生成</span></span>/<span style="display:inline-block;width:47.17px"><span style="display:inline-block;font-size:12.43px;transform:scaleX(0.9486);transform-origin:0 0">周辺機能</span></span>/<span style="display:inline-block;width:25.65px"><span style="display:inline-block;font-size:12.43px;transform:scaleX(0.6877);transform-origin:0 0">ポート</span></span></div>
<svg class="b" style="left:2px;top:1063px" width="3" height="14"><use href="#dots"/></svg>
<div class="b" style="left:0px;top:113px;width:2px;height:920px;background:#3a3a3a"></div>
<div class="b" style="left:0px;top:0px;width:1259px;height:1px;background:#3d4144"></div>
<div class="b" style="left:0px;top:0px;width:1px;height:1082px;background:#404446"></div>
<div class="b" style="left:1258px;top:0px;width:1px;height:1082px;background:#2e3133"></div>
<div class="b" style="left:0px;top:1081px;width:1259px;height:1px;background:#2e3133"></div>
<svg class="b" style="left:0px;top:0px;" width="8" height="8" viewBox="0 0 8 8"><path d="M0 0H8V1A7 7 0 0 0 1 8H0z" fill="#4a4e51"/><path d="M1 8A7 7 0 0 1 8 1" fill="none" stroke="#555" stroke-width="1"/></svg>
<svg class="b" style="left:1251px;top:0px;" width="8" height="8" viewBox="0 0 8 8"><path d="M8 0H0V1A7 7 0 0 1 7 8H8z" fill="#3d4144"/></svg>
<svg class="b" style="left:0px;top:1074px;" width="8" height="8" viewBox="0 0 8 8"><path d="M0 8H8V7A7 7 0 0 1 1 0H0z" fill="#2a2d2f"/></svg>
<svg class="b" style="left:1251px;top:1074px;" width="8" height="8" viewBox="0 0 8 8"><path d="M8 8H0V7A7 7 0 0 0 7 0H8z" fill="#2a2d2f"/></svg>
</body></html>
